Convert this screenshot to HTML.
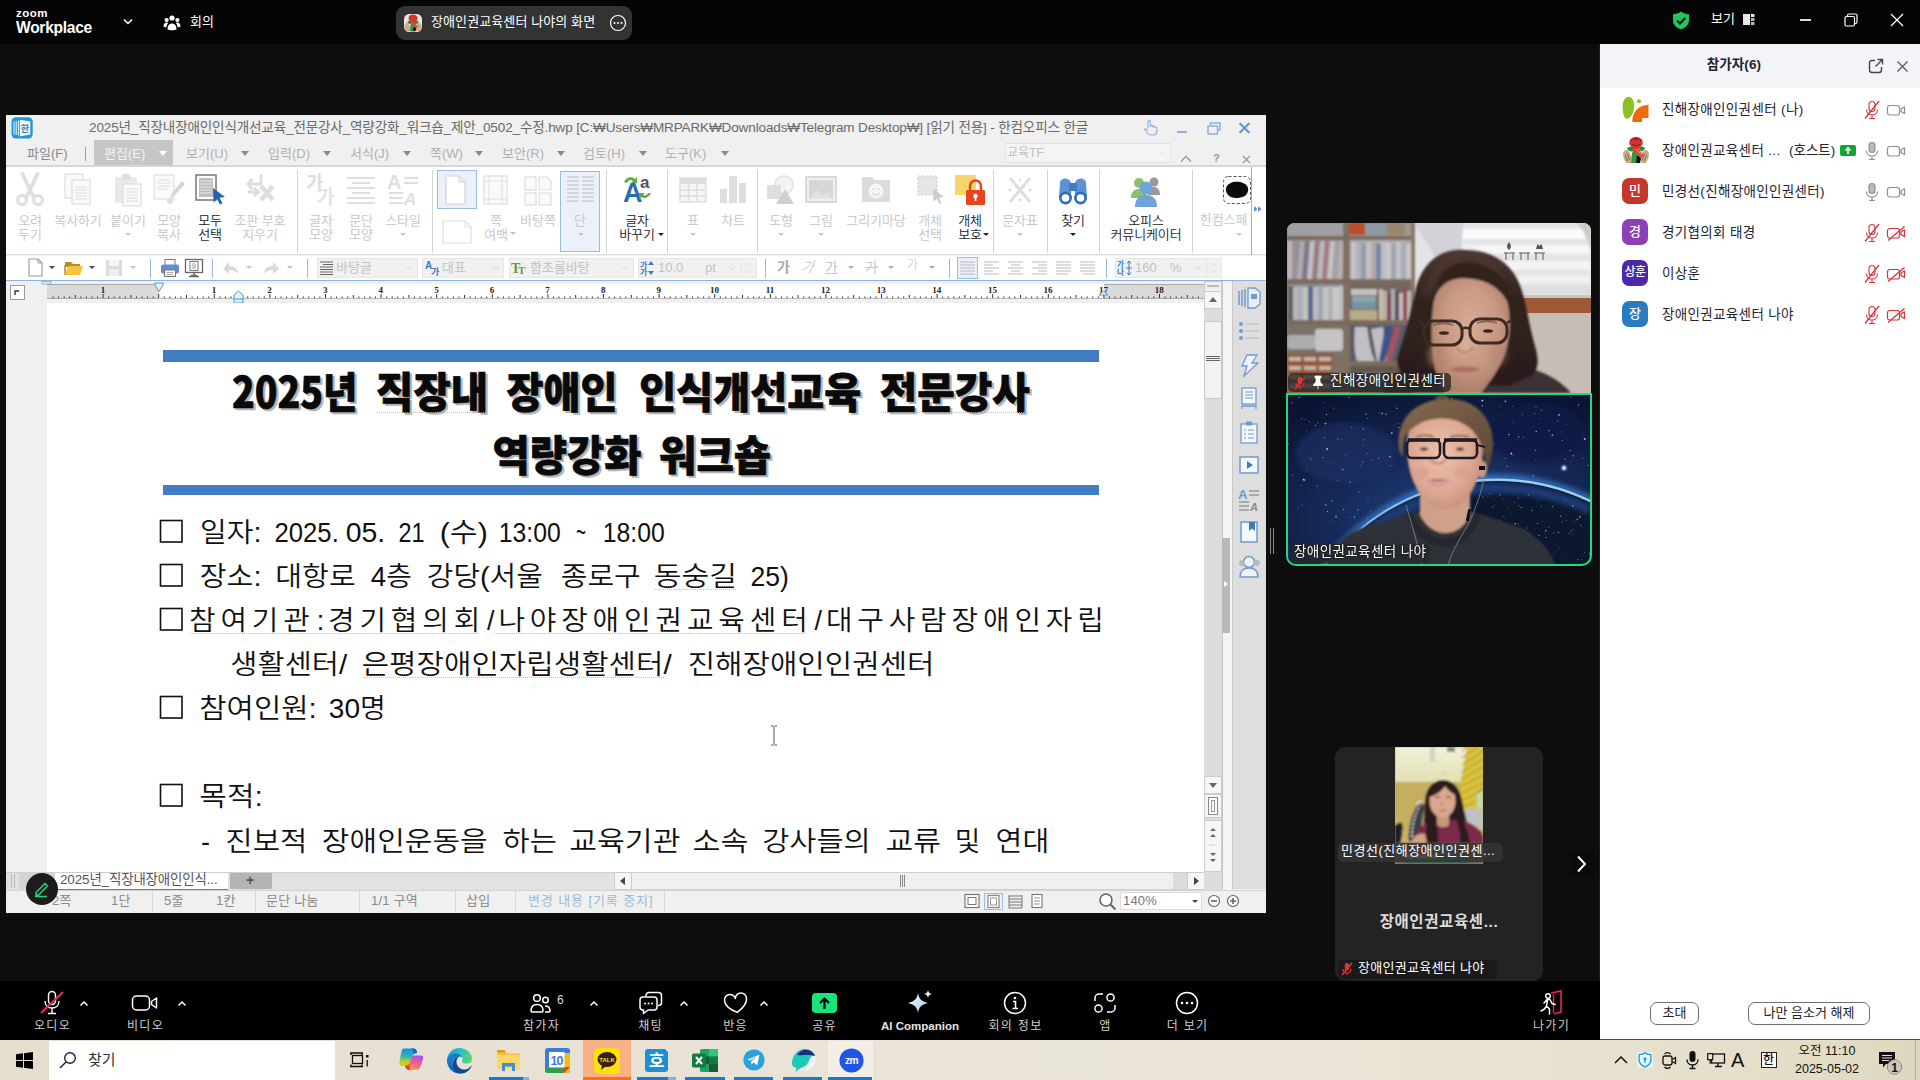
<!DOCTYPE html>
<html lang="ko">
<head>
<meta charset="utf-8">
<title>Zoom Workplace</title>
<style>

*{box-sizing:border-box;margin:0;padding:0}
html,body{width:1920px;height:1080px;overflow:hidden;background:#0d0d0d}
body{font-family:"Liberation Sans","Noto Sans CJK KR",sans-serif;position:relative;color:#fff}
.abs{position:absolute}
#topbar{position:absolute;left:0;top:0;width:1920px;height:44px;background:#050505}
#stage{position:absolute;left:0;top:44px;width:1600px;height:936px;background:#0d0d0d}
#zbar{position:absolute;left:0;top:981px;width:1600px;height:59px;background:#000}
#panel{position:absolute;left:1600px;top:44px;width:320px;height:996px;background:#fff;color:#222}
#panelhead{position:absolute;left:0;top:0;width:320px;height:44px;background:#f2f4f7}
#taskbar{position:absolute;left:0;top:1040px;width:1920px;height:40px;background:linear-gradient(90deg,#e5decf 0%,#e8e2d5 30%,#ebe6da 60%,#e7e1cf 84%,#e2dcc6 96%,#dcd6be 100%)}
#hwp{position:absolute;left:6px;top:115px;width:1260px;height:798px;background:#f0f0f0;color:#333;overflow:hidden}
#topbar .logo1{position:absolute;left:16px;top:6px;font-size:11.5px;font-weight:bold;letter-spacing:0.5px;color:#fff;line-height:14px}
#topbar .logo2{position:absolute;left:16px;top:18px;font-size:15.6px;font-weight:bold;color:#fff;line-height:20px;letter-spacing:-0.3px}
#topbar .t{position:absolute;color:#fff;font-size:13px;line-height:16px;white-space:nowrap}
#pill{position:absolute;left:396px;top:6px;width:236px;height:34px;border-radius:9px;background:#333}


.hw-title{font-size:13.56px;line-height:18px;color:#6a6a6a;text-align:center;white-space:nowrap;letter-spacing:-0.15px}
.hw-menu{font-size:13px;line-height:17px;white-space:nowrap}
.hw-lab{width:80px;text-align:center;font-weight:350;font-size:13px;line-height:14px;white-space:nowrap;letter-spacing:-0.1px}
.hw-st{font-size:13px;line-height:16px;color:#8a8a8a;white-space:nowrap;letter-spacing:0.2px}


.zl{position:absolute;top:1018px;width:120px;text-align:center;font-size:12px;line-height:16px;color:#cfcfcf;white-space:nowrap;letter-spacing:1.3px;padding-left:1px}
.pn{position:absolute;left:62px;font-size:13.5px;line-height:18px;color:#232333;white-space:nowrap;letter-spacing:0.35px}
.av{position:absolute;left:22px;width:26px;height:26px;border-radius:7px;color:#fff;font-size:13px;line-height:25px;text-align:center;font-weight:500;white-space:nowrap;overflow:hidden}
.pbtn{position:absolute;top:958px;height:23px;border:1px solid #6e6e6e;border-radius:7px;font-size:13px;line-height:19px;text-align:center;color:#222;background:#fff}
.tk{position:absolute;color:#111;white-space:nowrap}


.vlab{position:absolute;height:19px;border-radius:5px;background:rgba(30,30,30,.82);color:#fff;font-size:13px;line-height:18px;white-space:nowrap;overflow:hidden;letter-spacing:0.2px}

</style>
</head>
<body>
<div id="topbar">
<div class="logo1">zoom</div>
<div class="logo2">Workplace</div>
<svg class="abs" style="left:122px;top:18px" width="12" height="8" viewBox="0 0 12 8"><path d="M2 1.500 L6 5.500 L10 1.500" fill="none" stroke="#fff" stroke-width="1.500"/></svg>
<svg class="abs" style="left:163px;top:14px" width="18" height="17" viewBox="0 0 18 17"><g fill="#fff"><circle cx="9" cy="4" r="2.600"/><circle cx="3.600" cy="6" r="2.100"/><circle cx="14.400" cy="6" r="2.100"/><path d="M4.500 15.500c0-4 2-6 4.500-6s4.500 2 4.500 6c-1.500 1-7.500 1-9 0z"/><path d="M.5 12.500c0-2.500 1.400-4 3.200-4 .6 0 1.100.2 1.500.4-1 1-1.500 2.300-1.700 4.300-1.200 0-2.300-.2-3-.7z"/><path d="M17.500 12.500c0-2.500-1.400-4-3.200-4-.6 0-1.100.2-1.500.4 1 1 1.500 2.300 1.700 4.300 1.200 0 2.300-.2 3-.7z"/></g></svg>
<div class="t" style="left:190px;top:14px">회의</div>
<div id="pill">
<svg class="abs" style="left:8px;top:8px" width="18" height="18" viewBox="0 0 28 28"><rect width="28" height="28" rx="8" fill="#ece8e2"/><path d="M1 17c1-3 4-4 6-2l3 8-1 4H4c-2-3-3-6-3-10z" fill="#c9ad86"/><path d="M27 17c-1-3-4-4-6-2l-3 8 1 4h5c2-3 3-6 3-10z" fill="#c9ad86"/><path d="M11 27l1-6 4-2 3 3-1 5z" fill="#141414"/><path d="M5 12c3-2 6-2 9 0 3-2 7-2 9 0-1 3-4 4-7 3l-2 1-2-1c-3 1-6 0-7-3z" fill="#2a8a3a"/><path d="M9 27c1-5 0-9 2-12l3-2 2 3c-2 3-1 7-2 11z" fill="#2f9a40"/><path d="M13 11l9 8-3 3-9-8z" fill="#e8453e"/><ellipse cx="14" cy="6.500" rx="6.800" ry="5.800" fill="#d6332e"/></svg>
<div class="t" style="left:35px;top:8px;font-size:13px;letter-spacing:0.1px">장애인권교육센터 나야의 화면</div>
<svg class="abs" style="left:213px;top:8px" width="18" height="18" viewBox="0 0 18 18"><circle cx="9" cy="9" r="7.500" fill="none" stroke="#fff" stroke-width="1.200"/><circle cx="5.500" cy="9" r="1" fill="#fff"/><circle cx="9" cy="9" r="1" fill="#fff"/><circle cx="12.500" cy="9" r="1" fill="#fff"/></svg>
</div>
<svg class="abs" style="left:1672px;top:11px" width="18" height="19" viewBox="0 0 18 19"><path d="M9 .5c2.500 1.800 5 2.500 8 2.700v6c0 4.500-3.500 7.600-8 9.300-4.500-1.700-8-4.800-8-9.300v-6C4 3 6.500 2.300 9 .5z" fill="#23c55e"/><path d="M5 9.500l3 3 5.200-5.500" fill="none" stroke="#0a0a0a" stroke-width="2"/></svg>
<div class="t" style="left:1711px;top:11px">보기</div>
<svg class="abs" style="left:1743px;top:14px" width="12" height="12" viewBox="0 0 12 12"><rect x="0" y="0" width="7" height="11" fill="#e6e6e6"/><rect x="8" y="0" width="3.500" height="3" fill="#e6e6e6"/><rect x="8" y="4" width="3.500" height="3" fill="#bbb"/><rect x="8" y="8" width="3.500" height="3" fill="#bbb"/></svg>
<div class="abs" style="left:1800px;top:19px;width:11px;height:1.500px;background:#ddd"></div>
<svg class="abs" style="left:1844px;top:13px" width="14" height="14" viewBox="0 0 14 14"><rect x="1" y="3.500" width="9.500" height="9.500" rx="1.500" fill="none" stroke="#fff" stroke-width="1.200"/><path d="M3.500 3.500V2.500a1.500 1.500 0 0 1 1.500-1.500h6.500a1.500 1.500 0 0 1 1.500 1.500v6.500a1.500 1.500 0 0 1-1.500 1.500h-1" fill="none" stroke="#fff" stroke-width="1.200"/></svg>
<svg class="abs" style="left:1890px;top:13px" width="14" height="14" viewBox="0 0 14 14"><path d="M1 1l12 12M13 1L1 13" stroke="#fff" stroke-width="1.300"/></svg>
</div>

<div id="stage"></div>
<div id="hwp"><div class="abs" style="left:-6px;top:-115px;width:1920px;height:1080px">
<div class="abs" style="left:6px;top:115px;width:1260px;height:26px;background:#f0f0f0"></div>
<svg class="abs" style="left:11px;top:117px" width="22" height="22" viewBox="0 0 22 22"><rect x="0.500" y="0.300" width="21.200" height="21.200" rx="4.500" fill="#1c98d4"/><path d="M3 4.500v13M5.200 4v14M7.400 3.500v15" stroke="#d8f3fd" stroke-width="1.100"/><path d="M8.800 2.800l10.500 1.800v13l-10.500 1.800z" fill="#eef9fe"/><text x="13.800" y="14.800" font-size="9" font-weight="bold" text-anchor="middle" fill="#1c86c4" font-family="Liberation Sans, Noto Sans CJK KR, sans-serif">한</text></svg>
<div class="abs hw-title" style="left:89px;top:119px;width:997px">2025년_직장내장애인인식개선교육_전문강사_역량강화_워크숍_제안_0502_수정.hwp [C:₩Users₩MRPARK₩Downloads₩Telegram Desktop₩] [읽기 전용] - 한컴오피스 한글</div>
<svg class="abs" style="left:1143px;top:119px" width="15" height="17" viewBox="0 0 15 17"><path d="M5 9V2.500a1.200 1.200 0 0 1 2.400 0V8M7.400 7.500a1.100 1.100 0 0 1 2.200 0v1M9.600 8a1.100 1.100 0 0 1 2.200 0v1M11.800 9a1 1 0 0 1 2 0v3c0 2.500-1.500 4-4 4H8c-2 0-3-1-4-2.500L1.800 11c-.5-1 .8-1.800 1.600-.9L5 11.500" fill="none" stroke="#8db1de" stroke-width="1.100"/></svg>
<div class="abs" style="left:1177px;top:131px;width:10px;height:2px;background:#8db1de"></div>
<svg class="abs" style="left:1207px;top:122px" width="14" height="13" viewBox="0 0 14 13"><path d="M3.500 3.500V1h9.500v7h-2.500" fill="none" stroke="#8db1de" stroke-width="1.500"/><rect x="1" y="4" width="9.500" height="8" fill="none" stroke="#8db1de" stroke-width="1.500"/></svg>
<svg class="abs" style="left:1238px;top:122px" width="13" height="12" viewBox="0 0 13 12"><path d="M1.500 1l10 10M11.500 1l-10 10" stroke="#5c94d6" stroke-width="2"/></svg>
<div class="abs" style="left:6px;top:141px;width:1260px;height:26px;background:#f0f0f0;border-bottom:2px solid #d6d6d6"></div>
<div class="abs" style="left:94px;top:140px;width:79px;height:25px;background:#c6c6c6"></div>
<div class="abs" style="left:85px;top:147px;width:1px;height:14px;background:#7aa3d4"></div>
<div class="abs hw-menu" style="left:27px;top:145px;color:#8a8a8a">파일(F)</div>
<div class="abs hw-menu" style="left:104px;top:145px;color:#f4f4f4">편집(E)</div>
<div class="abs hw-menu" style="left:186px;top:145px;color:#b0b0b0">보기(U)</div>
<div class="abs hw-menu" style="left:268px;top:145px;color:#b0b0b0">입력(D)</div>
<div class="abs hw-menu" style="left:350px;top:145px;color:#b0b0b0">서식(J)</div>
<div class="abs hw-menu" style="left:430px;top:145px;color:#b0b0b0">쪽(W)</div>
<div class="abs hw-menu" style="left:502px;top:145px;color:#b0b0b0">보안(R)</div>
<div class="abs hw-menu" style="left:583px;top:145px;color:#b0b0b0">검토(H)</div>
<div class="abs hw-menu" style="left:665px;top:145px;color:#b0b0b0">도구(K)</div>
<div class="abs" style="left:159px;top:151px;border:4px solid transparent;border-top:5px solid #fff;border-bottom:0"></div>
<div class="abs" style="left:241px;top:151px;border:4px solid transparent;border-top:5px solid #8a8a8a;border-bottom:0"></div>
<div class="abs" style="left:323px;top:151px;border:4px solid transparent;border-top:5px solid #8a8a8a;border-bottom:0"></div>
<div class="abs" style="left:403px;top:151px;border:4px solid transparent;border-top:5px solid #8a8a8a;border-bottom:0"></div>
<div class="abs" style="left:475px;top:151px;border:4px solid transparent;border-top:5px solid #8a8a8a;border-bottom:0"></div>
<div class="abs" style="left:557px;top:151px;border:4px solid transparent;border-top:5px solid #8a8a8a;border-bottom:0"></div>
<div class="abs" style="left:639px;top:151px;border:4px solid transparent;border-top:5px solid #8a8a8a;border-bottom:0"></div>
<div class="abs" style="left:721px;top:151px;border:4px solid transparent;border-top:5px solid #8a8a8a;border-bottom:0"></div>
<div class="abs" style="left:1005px;top:143px;width:166px;height:20px;background:#f4f4f4;border:1px solid #e2e2e2"></div>
<div class="abs" style="left:1007px;top:145px;font-size:12px;color:#c0c0c0;line-height:16px">교육TF</div>
<svg class="abs" style="left:1159px;top:151px" width="8" height="5" viewBox="0 0 8 5"><path d="M1 1l3 3 3-3" fill="none" stroke="#ddd" stroke-width="1"/></svg>
<svg class="abs" style="left:1180px;top:155px" width="12" height="8" viewBox="0 0 12 8"><path d="M1 6.500l5-5 5 5" fill="none" stroke="#999" stroke-width="1.300"/></svg>
<div class="abs" style="left:1213px;top:152px;font-size:11px;color:#999;line-height:12px;font-weight:bold">?</div>
<svg class="abs" style="left:1242px;top:155px" width="9" height="9" viewBox="0 0 9 9"><path d="M1 1l7 7M8 1l-7 7" stroke="#999" stroke-width="1.300"/></svg>
<div class="abs" style="left:6px;top:167px;width:1260px;height:88px;background:#fff;border-bottom:1px solid #dcdcdc"></div>
<svg class="abs" style="left:12px;top:171px" width="36" height="38" viewBox="0 0 36 38"><g fill="none" stroke="#dedede"><path d="M10.500 3l10.500 22M25.500 3L15 25" stroke-width="4" stroke-linecap="round"/><circle cx="10" cy="29" r="4.500" stroke-width="3"/><circle cx="26" cy="29" r="4.500" stroke-width="3"/></g></svg>
<div class="abs hw-lab" style="left:-10px;top:214px;color:#c4c4c4">오려</div><div class="abs hw-lab" style="left:-10px;top:228px;color:#c4c4c4">두기</div>
<svg class="abs" style="left:60px;top:171px" width="36" height="38" viewBox="0 0 36 38"><g fill="#fafafa" stroke="#dedede" stroke-width="1.200"><rect x="5" y="3" width="18" height="24"/><rect x="12" y="9" width="18" height="24"/></g><path d="M15 16h12M15 19h12M15 22h12M15 25h12M15 28h12" stroke="#dedede" stroke-width="1"/></svg>
<div class="abs hw-lab" style="left:38px;top:214px;color:#c4c4c4">복사하기</div>
<svg class="abs" style="left:110px;top:171px" width="36" height="38" viewBox="0 0 36 38"><rect x="5" y="6" width="22" height="26" rx="2" fill="#e9e9e9"/><rect x="12" y="3" width="8" height="6" rx="2" fill="#dcdcdc"/><rect x="13" y="13" width="18" height="22" fill="#fafafa" stroke="#dedede" stroke-width="1.200"/><path d="M16 18h12M16 21h12M16 24h12M16 27h12M16 30h12" stroke="#dedede" stroke-width="1"/></svg>
<div class="abs hw-lab" style="left:88px;top:214px;color:#c4c4c4">붙이기</div>
<div class="abs" style="left:125px;top:233px;border:3px solid transparent;border-top:3px solid #c4c4c4;border-bottom:0"></div>
<svg class="abs" style="left:151px;top:171px" width="36" height="38" viewBox="0 0 36 38"><rect x="3" y="4" width="20" height="24" fill="#fafafa" stroke="#dedede" stroke-width="1.200"/><path d="M6 9h14M6 12h14M6 15h14M6 18h10" stroke="#dedede" stroke-width="1"/><path d="M31 10l3 3-10 11-5 4 2-6z" fill="#d6d6d6"/><circle cx="19" cy="30" r="3" fill="#dedede"/></svg>
<div class="abs hw-lab" style="left:129px;top:214px;color:#c4c4c4">모양</div><div class="abs hw-lab" style="left:129px;top:228px;color:#c4c4c4">복사</div>
<svg class="abs" style="left:192px;top:171px" width="36" height="38" viewBox="0 0 36 38"><rect x="4" y="4" width="20" height="25" fill="#fff" stroke="#7d7d7d" stroke-width="1.600"/><rect x="7" y="7" width="14" height="19" fill="#bdbdbd"/><path d="M8 10h12M8 13h12M8 16h12M8 19h12M8 22h12" stroke="#e8e8e8" stroke-width="1"/><path d="M21 17l12 9-5.500.8 3 5.500-2.500 1.200-3-5.500-3.500 3.500z" fill="#1e63b0"/></svg>
<div class="abs hw-lab" style="left:170px;top:214px;color:#222">모두</div><div class="abs hw-lab" style="left:170px;top:228px;color:#222">선택</div>
<svg class="abs" style="left:242px;top:171px" width="36" height="38" viewBox="0 0 36 38"><g stroke="#dedede" fill="none"><path d="M19 3v10H6M10.500 8l-5 5 5 5M6 21h10M12 17l5 4-5 4" stroke-width="2.800"/><path d="M19 15l12 14M31 15L19 29" stroke-width="4.500"/></g></svg>
<div class="abs hw-lab" style="left:220px;top:214px;color:#c4c4c4">조판 부호</div><div class="abs hw-lab" style="left:220px;top:228px;color:#c4c4c4">지우기</div>
<div class="abs" style="left:297px;top:170px;width:1px;height:83px;background:#d2d2d2"></div>
<svg class="abs" style="left:303px;top:171px" width="36" height="38" viewBox="0 0 36 38"><text x="3" y="19" font-size="19" fill="#dedede" font-weight="bold" font-family="Liberation Sans, Noto Sans CJK KR, sans-serif">가</text><text x="14" y="33" font-size="19" fill="#e4e4e4" font-weight="bold" font-family="Liberation Sans, Noto Sans CJK KR, sans-serif">가</text></svg>
<div class="abs hw-lab" style="left:281px;top:214px;color:#c4c4c4">글자</div><div class="abs hw-lab" style="left:281px;top:228px;color:#c4c4c4">모양</div>
<svg class="abs" style="left:343px;top:171px" width="36" height="38" viewBox="0 0 36 38"><path d="M4 7h28M9 12h18M4 17h28M9 22h18M4 27h28M4 32h28" stroke="#dedede" stroke-width="2"/></svg>
<div class="abs hw-lab" style="left:321px;top:214px;color:#c4c4c4">문단</div><div class="abs hw-lab" style="left:321px;top:228px;color:#c4c4c4">모양</div>
<svg class="abs" style="left:385px;top:171px" width="36" height="38" viewBox="0 0 36 38"><text x="2" y="18" font-size="20" fill="#dedede" font-weight="bold" font-family="Liberation Sans, sans-serif">A</text><path d="M19 7h14M19 12h14M4 22h14M4 27h14M4 32h14" stroke="#dedede" stroke-width="2"/><text x="19" y="34" font-size="17" fill="#dedede" font-weight="bold" font-style="italic" font-family="Liberation Sans, sans-serif">A</text></svg>
<div class="abs hw-lab" style="left:363px;top:214px;color:#c4c4c4">스타일</div>
<div class="abs" style="left:400px;top:233px;border:3px solid transparent;border-top:3px solid #c4c4c4;border-bottom:0"></div>
<div class="abs" style="left:432px;top:170px;width:1px;height:83px;background:#d2d2d2"></div>
<div class="abs" style="left:437px;top:170px;width:40px;height:39px;background:#eaf1fb;border:1px solid #9dbce4"></div>
<svg class="abs" style="left:437px;top:171px" width="36" height="38" viewBox="0 0 36 38"><path d="M9 5h13l6 6v22H9z" fill="#fff" stroke="#cfd3d8" stroke-width="1.200"/><path d="M22 5v6h6" fill="#eee" stroke="#cfd3d8" stroke-width="1"/></svg>
<svg class="abs" style="left:440px;top:218px" width="34" height="28" viewBox="0 0 34 28"><path d="M3 3h22l6 6v16H3z" fill="#fff" stroke="#dedede" stroke-width="1.200"/><path d="M25 3v6h6" fill="none" stroke="#dedede" stroke-width="1"/></svg>
<svg class="abs" style="left:478px;top:171px" width="36" height="38" viewBox="0 0 36 38"><rect x="6" y="5" width="23" height="28" fill="#fafafa" stroke="#dedede" stroke-width="1.200"/><path d="M11 5v28M24 5v28M6 10h23M6 28h23" stroke="#dedede" stroke-width="1"/></svg>
<div class="abs hw-lab" style="left:456px;top:214px;color:#c4c4c4">쪽</div><div class="abs hw-lab" style="left:456px;top:228px;color:#c4c4c4">여백</div>
<div class="abs" style="left:510px;top:232px;border:3px solid transparent;border-top:3px solid #c4c4c4;border-bottom:0"></div>
<svg class="abs" style="left:520px;top:171px" width="36" height="38" viewBox="0 0 36 38"><g fill="#fafafa" stroke="#dedede" stroke-width="1.200"><rect x="5" y="6" width="11" height="13"/><path d="M19 6h8l4 4v9H19z"/><rect x="5" y="22" width="11" height="12"/><rect x="19" y="22" width="12" height="12"/></g></svg>
<div class="abs hw-lab" style="left:498px;top:214px;color:#c4c4c4">바탕쪽</div>
<div class="abs" style="left:560px;top:171px;width:40px;height:81px;background:#eaf1fb;border:1px solid #9dbce4"></div>
<svg class="abs" style="left:562px;top:171px" width="36" height="38" viewBox="0 0 36 38"><path d="M5 6h12M5 10h12M5 14h12M5 18h12M5 22h12M5 26h12M5 30h12M20 6h12M20 10h12M20 14h12M20 18h12M20 22h12M20 26h12M20 30h12" stroke="#d4d8de" stroke-width="2"/></svg>
<div class="abs hw-lab" style="left:540px;top:214px;color:#c4c4c4">단</div>
<div class="abs" style="left:578px;top:233px;border:3px solid transparent;border-top:3px solid #c4c4c4;border-bottom:0"></div>
<div class="abs" style="left:606px;top:170px;width:1px;height:83px;background:#d2d2d2"></div>
<svg class="abs" style="left:619px;top:171px" width="36" height="38" viewBox="0 0 36 38"><text x="4" y="31" font-size="27" fill="#2a6bb5" font-weight="bold" font-family="Liberation Sans, sans-serif">A</text><text x="21" y="17" font-size="17" fill="#555" font-weight="bold" font-family="Liberation Sans, sans-serif">a</text><path d="M5 11c2-5 8-6 11-3l2-2v6h-6l2-2c-2-2-5-1-6 2z" fill="#5eae3a"/><path d="M32 22c-2 5-7 6-10 4l-2 2v-6h6l-2 2c2 1 4 0 5-2z" fill="#5eae3a"/></svg>
<div class="abs hw-lab" style="left:597px;top:214px;color:#222">글자</div><div class="abs hw-lab" style="left:597px;top:228px;color:#222">바꾸기</div>
<div class="abs" style="left:658px;top:233px;border:3px solid transparent;border-top:3px solid #222;border-bottom:0"></div>
<div class="abs" style="left:667px;top:170px;width:1px;height:83px;background:#d2d2d2"></div>
<svg class="abs" style="left:675px;top:171px" width="36" height="38" viewBox="0 0 36 38"><rect x="5" y="7" width="26" height="24" fill="#f6f6f6" stroke="#dedede" stroke-width="1.500"/><rect x="5" y="7" width="26" height="6" fill="#dedede"/><path d="M5 19h26M5 25h26M13.500 13v18M22 13v18" stroke="#dedede" stroke-width="1.500"/></svg>
<div class="abs hw-lab" style="left:653px;top:214px;color:#c4c4c4">표</div>
<div class="abs" style="left:690px;top:233px;border:3px solid transparent;border-top:3px solid #c4c4c4;border-bottom:0"></div>
<svg class="abs" style="left:715px;top:171px" width="36" height="38" viewBox="0 0 36 38"><rect x="5" y="18" width="7" height="14" fill="#dedede"/><rect x="14" y="5" width="8" height="27" fill="#dedede"/><rect x="24" y="12" width="7" height="20" fill="#dedede"/></svg>
<div class="abs hw-lab" style="left:693px;top:214px;color:#c4c4c4">차트</div>
<div class="abs" style="left:757px;top:170px;width:1px;height:83px;background:#d2d2d2"></div>
<svg class="abs" style="left:763px;top:171px" width="36" height="38" viewBox="0 0 36 38"><circle cx="21" cy="14" r="9" fill="#f4f4f4" stroke="#dedede" stroke-width="1.500"/><rect x="4" y="14" width="14" height="14" fill="#dedede"/><path d="M22 18l9 15H13z" fill="#d0d0d0"/></svg>
<div class="abs hw-lab" style="left:741px;top:214px;color:#c4c4c4">도형</div>
<div class="abs" style="left:778px;top:233px;border:3px solid transparent;border-top:3px solid #c4c4c4;border-bottom:0"></div>
<svg class="abs" style="left:803px;top:171px" width="36" height="38" viewBox="0 0 36 38"><rect x="3" y="6" width="30" height="25" fill="#f0f0f0" stroke="#d0d0d0" stroke-width="1.500"/><rect x="6" y="9" width="24" height="19" fill="#d6d6d6"/><path d="M6 28l8-9 6 6 4-4 6 7z" fill="#e2e2e2"/></svg>
<div class="abs hw-lab" style="left:781px;top:214px;color:#c4c4c4">그림</div>
<div class="abs" style="left:818px;top:233px;border:3px solid transparent;border-top:3px solid #c4c4c4;border-bottom:0"></div>
<svg class="abs" style="left:858px;top:171px" width="36" height="38" viewBox="0 0 36 38"><path d="M4 6h10l2 3h16v22H4z" fill="#dcdcdc"/><circle cx="18" cy="20" r="7.500" fill="#f6f6f6"/><circle cx="15.500" cy="18" r="1" fill="#d0d0d0"/><circle cx="20.500" cy="18" r="1" fill="#d0d0d0"/><path d="M14.500 22c2 2.500 5 2.500 7 0" stroke="#d0d0d0" fill="none" stroke-width="1.200"/></svg>
<div class="abs hw-lab" style="left:836px;top:214px;color:#c4c4c4">그리기마당</div>
<svg class="abs" style="left:912px;top:171px" width="36" height="38" viewBox="0 0 36 38"><rect x="6" y="5" width="19" height="19" fill="#e6e6e6" stroke="#cfcfcf" stroke-dasharray="2 2" stroke-width="1.200"/><path d="M21 17l11 9-5 .8 2.500 5-2.200 1-2.500-5-3.500 3z" fill="#cdcdcd"/></svg>
<div class="abs hw-lab" style="left:890px;top:214px;color:#c4c4c4">개체</div><div class="abs hw-lab" style="left:890px;top:228px;color:#c4c4c4">선택</div>
<svg class="abs" style="left:952px;top:171px" width="36" height="38" viewBox="0 0 36 38"><rect x="3" y="4" width="21" height="20" fill="#f9d36b"/><rect x="14" y="19" width="19" height="15" rx="1.500" fill="#e8441e"/><path d="M18 19v-4a5.500 5.500 0 0 1 11 0v4" fill="none" stroke="#e8441e" stroke-width="2.500"/><circle cx="23.500" cy="25" r="2.200" fill="#fff"/><rect x="22.600" y="26" width="1.800" height="4" fill="#fff"/></svg>
<div class="abs hw-lab" style="left:930px;top:214px;color:#222">개체</div><div class="abs hw-lab" style="left:930px;top:228px;color:#222">보호</div>
<div class="abs" style="left:983px;top:233px;border:3px solid transparent;border-top:3px solid #222;border-bottom:0"></div>
<div class="abs" style="left:993px;top:170px;width:1px;height:83px;background:#d2d2d2"></div>
<svg class="abs" style="left:1002px;top:171px" width="36" height="38" viewBox="0 0 36 38"><path d="M8 7l20 24M28 7L8 31" stroke="#dedede" stroke-width="3"/><circle cx="18" cy="9" r="1.500" fill="#dedede"/><circle cx="18" cy="29" r="1.500" fill="#dedede"/><circle cx="8" cy="19" r="1.500" fill="#dedede"/><circle cx="28" cy="19" r="1.500" fill="#dedede"/></svg>
<div class="abs hw-lab" style="left:980px;top:214px;color:#c4c4c4">문자표</div>
<div class="abs" style="left:1017px;top:233px;border:3px solid transparent;border-top:3px solid #c4c4c4;border-bottom:0"></div>
<div class="abs" style="left:1047px;top:170px;width:1px;height:83px;background:#d2d2d2"></div>
<svg class="abs" style="left:1055px;top:171px" width="36" height="38" viewBox="0 0 36 38"><path d="M5 12c0-6 10-6 11 0v14H4zM20 12c1-6 11-6 11 0l1 14H20z" fill="#5b93d3"/><rect x="14" y="12" width="8" height="8" fill="#3f7bc0"/><circle cx="10.500" cy="27" r="6.500" fill="#2f6fba"/><circle cx="25.500" cy="27" r="6.500" fill="#2f6fba"/><circle cx="10.500" cy="27" r="3.800" fill="#fff"/><circle cx="25.500" cy="27" r="3.800" fill="#fff"/></svg>
<div class="abs hw-lab" style="left:1033px;top:214px;color:#222">찾기</div>
<div class="abs" style="left:1070px;top:233px;border:3px solid transparent;border-top:3px solid #222;border-bottom:0"></div>
<div class="abs" style="left:1099px;top:170px;width:1px;height:83px;background:#d2d2d2"></div>
<svg class="abs" style="left:1128px;top:171px" width="36" height="38" viewBox="0 0 36 38"><circle cx="11" cy="12" r="5" fill="#8cc06a"/><path d="M3 27c0-7 4-9 8-9s6 2 7 5v4z" fill="#8cc06a"/><circle cx="26" cy="11" r="4.500" fill="#9a9a9a"/><path d="M20 24c0-6 3-8 6-8s6 2 6 8z" fill="#9a9a9a"/><circle cx="18" cy="17" r="6.500" fill="#6fa3da"/><path d="M7 36c0-9 5-12 11-12s11 3 11 12z" fill="#6fa3da"/></svg>
<div class="abs hw-lab" style="left:1106px;top:214px;color:#222">오피스</div><div class="abs hw-lab" style="left:1106px;top:228px;color:#222">커뮤니케이터</div>
<div class="abs" style="left:1192px;top:170px;width:1px;height:83px;background:#d2d2d2"></div>
<div class="abs" style="left:1192px;top:168px;width:59px;height:86px;overflow:hidden">
<svg class="abs" style="left:31px;top:8px" width="28" height="28" viewBox="0 0 28 28"><rect x="0.500" y="0.500" width="27" height="27" rx="5" fill="#fafafa" stroke="#555" stroke-dasharray="3 2" stroke-width="1"/><path d="M3 12c2-6 9-7 14-6s9 4 8 9-6 7-12 7-11-4-10-10z" fill="#0a0a0a"/></svg>
<div class="abs hw-lab" style="left:8px;top:45px;width:80px;text-align:left;color:#c4c4c4">한컴스페</div>
</div>
<div class="abs" style="left:1236px;top:233px;border:3px solid transparent;border-top:3px solid #c4c4c4;border-bottom:0"></div>
<div class="abs" style="left:1251px;top:167px;width:1px;height:88px;background:#8fb3dc"></div>
<svg class="abs" style="left:1254px;top:205px" width="8" height="8" viewBox="0 0 8 8"><path d="M0 1l3.500 3L0 7zM4 1l3.500 3L4 7z" fill="#5c94d6"/></svg>
<div class="abs" style="left:6px;top:256px;width:1260px;height:24px;background:#fff"></div>
<svg class="abs" style="left:28px;top:258px" width="16" height="19" viewBox="0 0 16 19"><path d="M1 1h9l4 4v13H1z" fill="#fff" stroke="#999" stroke-width="1.100"/><path d="M10 1v4h4" fill="none" stroke="#999" stroke-width="1"/></svg>
<div class="abs" style="left:49px;top:266px;border:3px solid transparent;border-top:3px solid #444;border-bottom:0"></div>
<svg class="abs" style="left:64px;top:260px" width="20" height="16" viewBox="0 0 20 16"><path d="M1 2h6l2 2h7v3H1z" fill="#b78c2c"/><path d="M1 15l3-9h15l-3 9z" fill="#f5c43c"/><path d="M1 5v10" stroke="#b78c2c" stroke-width="1.500"/></svg>
<div class="abs" style="left:89px;top:266px;border:3px solid transparent;border-top:3px solid #444;border-bottom:0"></div>
<svg class="abs" style="left:105px;top:259px" width="18" height="18" viewBox="0 0 18 18"><rect x="1" y="1" width="16" height="16" fill="#dcdcdc"/><rect x="4" y="1" width="10" height="6" fill="#f4f4f4"/><rect x="4" y="10" width="10" height="7" fill="#eee"/></svg>
<div class="abs" style="left:130px;top:266px;border:3px solid transparent;border-top:3px solid #c4c4c4;border-bottom:0"></div>
<div class="abs" style="left:150px;top:259px;width:1px;height:19px;background:#9ab8dd"></div>
<svg class="abs" style="left:160px;top:258px" width="20" height="20" viewBox="0 0 20 20"><rect x="5" y="1.500" width="10" height="6" fill="#fff" stroke="#777" stroke-width="1"/><rect x="1" y="6.500" width="18" height="9" rx="2" fill="#5b8fd0"/><rect x="4.500" y="12" width="11" height="6.500" fill="#fff" stroke="#777" stroke-width="1"/><path d="M6.500 14.500h7M6.500 16.500h7" stroke="#999" stroke-width=".8"/></svg>
<svg class="abs" style="left:184px;top:258px" width="20" height="20" viewBox="0 0 20 20"><rect x="1.500" y="1.500" width="17" height="13" fill="#fff" stroke="#666" stroke-width="1.300"/><rect x="6" y="3.500" width="8" height="9" fill="#fff" stroke="#777" stroke-width="1"/><path d="M8 6h4M8 8h4M8 10h4" stroke="#888" stroke-width=".8"/><path d="M7 17.500h6M10 14.500v3" stroke="#666" stroke-width="1.500"/><path d="M5 18.500h10" stroke="#666" stroke-width="1.500"/></svg>
<div class="abs" style="left:212px;top:259px;width:1px;height:19px;background:#9ab8dd"></div>
<svg class="abs" style="left:222px;top:260px" width="18" height="15" viewBox="0 0 18 15"><path d="M1 9l6-7v4c6 0 9 3 9 8-2-3-5-4-9-4v4z" fill="#d8d8d8"/></svg>
<div class="abs" style="left:246px;top:266px;border:3px solid transparent;border-top:3px solid #c4c4c4;border-bottom:0"></div>
<svg class="abs" style="left:262px;top:260px" width="18" height="15" viewBox="0 0 18 15"><path d="M17 9l-6-7v4c-6 0-9 3-9 8 2-3 5-4 9-4v4z" fill="#d8d8d8"/></svg>
<div class="abs" style="left:287px;top:266px;border:3px solid transparent;border-top:3px solid #c4c4c4;border-bottom:0"></div>
<div class="abs" style="left:307px;top:259px;width:1px;height:19px;background:#9ab8dd"></div>
<div class="abs" style="left:317px;top:258px;width:101px;height:20px;background:#f1f1f1;border:1px solid #e6e6e6"></div><svg class="abs" style="left:320px;top:261px" width="13" height="14" viewBox="0 0 13 14"><path d="M0 1h13M3 3.500h10M0 6h13M0 8.500h13M0 11h13M0 13.500h13" stroke="#666" stroke-width="1.100"/></svg><div class="abs" style="left:336px;top:260px;font-size:13px;line-height:16px;color:#c2c2c2;white-space:nowrap">바탕글</div><svg class="abs" style="left:406px;top:266px" width="7" height="5" viewBox="0 0 7 5"><path d="M.5 .5l3 3 3-3" fill="none" stroke="#d4d4d4" stroke-width="1"/></svg>
<div class="abs" style="left:422px;top:258px;width:82px;height:20px;background:#f1f1f1;border:1px solid #e6e6e6"></div><svg class="abs" style="left:425px;top:260px" width="16" height="16" viewBox="0 0 16 16"><text x="0" y="9" font-size="10" font-weight="bold" fill="#3b78c4" font-family="Liberation Sans, sans-serif">A</text><text x="6" y="15" font-size="9" font-weight="bold" fill="#3b78c4" font-family="Liberation Sans, Noto Sans CJK KR, sans-serif">가</text></svg><div class="abs" style="left:442px;top:260px;font-size:13px;line-height:16px;color:#c2c2c2;white-space:nowrap">대표</div><svg class="abs" style="left:492px;top:266px" width="7" height="5" viewBox="0 0 7 5"><path d="M.5 .5l3 3 3-3" fill="none" stroke="#d4d4d4" stroke-width="1"/></svg>
<div class="abs" style="left:509px;top:258px;width:125px;height:20px;background:#f1f1f1;border:1px solid #e6e6e6"></div><svg class="abs" style="left:511px;top:260px" width="18" height="16" viewBox="0 0 18 16"><text x="0" y="13" font-size="14" font-weight="bold" fill="#6a9a3a" font-family="Liberation Serif, serif">T</text><text x="7" y="14" font-size="11" font-weight="bold" fill="#6a9a3a" font-family="Liberation Serif, serif">T</text></svg><div class="abs" style="left:530px;top:260px;font-size:13px;line-height:16px;color:#c2c2c2;white-space:nowrap">함초롬바탕</div><svg class="abs" style="left:622px;top:266px" width="7" height="5" viewBox="0 0 7 5"><path d="M.5 .5l3 3 3-3" fill="none" stroke="#d4d4d4" stroke-width="1"/></svg>
<div class="abs" style="left:638px;top:258px;width:104px;height:20px;background:#f1f1f1;border:1px solid #e6e6e6"></div>
<div class="abs" style="left:741px;top:258px;width:16px;height:20px;background:#f1f1f1;border:1px solid #e6e6e6"></div>
<svg class="abs" style="left:640px;top:260px" width="16" height="16" viewBox="0 0 16 16"><text x="0" y="8" font-size="8" font-weight="bold" fill="#3b78c4" font-family="Liberation Sans, Noto Sans CJK KR, sans-serif">가</text><text x="0" y="15" font-size="8" font-weight="bold" fill="#3b78c4" font-family="Liberation Sans, Noto Sans CJK KR, sans-serif">가</text><path d="M11 1l3 4h-6zM11 15l3-4h-6z" fill="#3b78c4"/></svg>
<div class="abs" style="left:658px;top:260px;font-size:13px;line-height:16px;color:#c2c2c2">10.0</div>
<div class="abs" style="left:705px;top:260px;font-size:13px;line-height:16px;color:#c2c2c2">pt</div>
<svg class="abs" style="left:729px;top:266px" width="7" height="5" viewBox="0 0 7 5"><path d="M.5 .5l3 3 3-3" fill="none" stroke="#d4d4d4" stroke-width="1"/></svg>
<svg class="abs" style="left:746px;top:262px" width="6" height="12" viewBox="0 0 6 12"><path d="M.5 3.500l2.500-2.500 2.500 2.500M.5 8.500l2.500 2.500 2.500-2.500" fill="none" stroke="#ddd" stroke-width="1"/></svg>
<div class="abs" style="left:765px;top:259px;width:1px;height:19px;background:#9ab8dd"></div>
<div class="abs" style="left:777px;top:259px;font-size:14px;line-height:17px;color:#aaa;font-weight:bold">가</div>
<div class="abs" style="left:801px;top:259px;font-size:14px;line-height:17px;color:#ccc;font-style:italic;transform:skewX(-12deg)">가</div>
<div class="abs" style="left:825px;top:259px;font-size:14px;line-height:17px;color:#c4c4c4;text-decoration:underline">가</div>
<div class="abs" style="left:848px;top:266px;border:3px solid transparent;border-top:3px solid #aaa;border-bottom:0"></div>
<div class="abs" style="left:865px;top:259px;font-size:14px;line-height:17px;color:#ccc;text-decoration:line-through">가</div>
<div class="abs" style="left:888px;top:266px;border:3px solid transparent;border-top:3px solid #aaa;border-bottom:0"></div>
<div class="abs" style="left:907px;top:258px;font-size:12px;line-height:15px;color:#d4d4d4">가</div>
<div class="abs" style="left:929px;top:266px;border:3px solid transparent;border-top:3px solid #aaa;border-bottom:0"></div>
<div class="abs" style="left:949px;top:259px;width:1px;height:19px;background:#9ab8dd"></div>
<div class="abs" style="left:957px;top:257px;width:21px;height:22px;background:#eaf1fb;border:1px solid #9dbce4"></div>
<svg class="abs" style="left:960px;top:261px" width="15" height="14" viewBox="0 -1 15 14"><path d="M0 0h15M0 3h15M0 6h15M0 9h15M0 12h15" stroke="#c8ccd2" stroke-width="1.400"/></svg>
<svg class="abs" style="left:984px;top:261px" width="15" height="14" viewBox="0 -1 15 14"><path d="M0 0h15M0 3h9M0 6h15M0 9h9M0 12h15" stroke="#d2d2d2" stroke-width="1.400"/></svg>
<svg class="abs" style="left:1008px;top:261px" width="15" height="14" viewBox="0 -1 15 14"><path d="M0 0h15M3 3h9M0 6h15M3 9h9M0 12h15" stroke="#d2d2d2" stroke-width="1.400"/></svg>
<svg class="abs" style="left:1032px;top:261px" width="15" height="14" viewBox="0 -1 15 14"><path d="M0 0h15M6 3h9M0 6h15M6 9h9M0 12h15" stroke="#d2d2d2" stroke-width="1.400"/></svg>
<svg class="abs" style="left:1056px;top:261px" width="15" height="14" viewBox="0 -1 15 14"><path d="M0 0h15M0 3h15M0 6h15M0 9h15M0 12h12" stroke="#d2d2d2" stroke-width="1.400"/></svg>
<svg class="abs" style="left:1080px;top:261px" width="15" height="14" viewBox="0 -1 15 14"><path d="M0 0h15M0 3h15M0 6h15M0 9h15M3 12h12" stroke="#d2d2d2" stroke-width="1.400"/></svg>
<div class="abs" style="left:1106px;top:259px;width:1px;height:19px;background:#9ab8dd"></div>
<div class="abs" style="left:1115px;top:258px;width:92px;height:20px;background:#f1f1f1;border:1px solid #e6e6e6"></div>
<div class="abs" style="left:1206px;top:258px;width:16px;height:20px;background:#f1f1f1;border:1px solid #e6e6e6"></div>
<svg class="abs" style="left:1117px;top:260px" width="16" height="16" viewBox="0 0 16 16"><text x="0" y="7" font-size="7.500" font-weight="bold" fill="#3b78c4" font-family="Liberation Sans, Noto Sans CJK KR, sans-serif">가</text><text x="0" y="15" font-size="7.500" font-weight="bold" fill="#3b78c4" font-family="Liberation Sans, Noto Sans CJK KR, sans-serif">나</text><path d="M12 1v14M10 3.500l2-2.500 2 2.500M10 12.500l2 2.500 2-2.500M9 8h6" stroke="#3b78c4" fill="none" stroke-width="1"/></svg>
<div class="abs" style="left:1135px;top:260px;font-size:13px;line-height:16px;color:#c2c2c2">160</div>
<div class="abs" style="left:1170px;top:260px;font-size:13px;line-height:16px;color:#c2c2c2">%</div>
<svg class="abs" style="left:1194px;top:266px" width="7" height="5" viewBox="0 0 7 5"><path d="M.5 .5l3 3 3-3" fill="none" stroke="#d4d4d4" stroke-width="1"/></svg>
<svg class="abs" style="left:1211px;top:262px" width="6" height="12" viewBox="0 0 6 12"><path d="M.5 3.500l2.500-2.500 2.500 2.500M.5 8.500l2.500 2.500 2.500-2.500" fill="none" stroke="#ddd" stroke-width="1"/></svg>
<div class="abs" style="left:6px;top:280px;width:1260px;height:1px;background:#8fb3dc"></div>
<div class="abs" style="left:6px;top:281px;width:1260px;height:22px;background:#f0f0f0"></div>
<div class="abs" style="left:10px;top:285px;width:15px;height:15px;background:#fff;border:1px solid #999"></div>
<svg class="abs" style="left:14px;top:290px" width="6" height="6" viewBox="0 0 6 6"><path d="M1 5V1h4" fill="none" stroke="#333" stroke-width="1.400"/></svg>
<div class="abs" style="left:47px;top:284px;width:1157px;height:15px;background:#fff"></div>
<div class="abs" style="left:47px;top:284px;width:112px;height:15px;background:#dadada;border-top:1px solid #aaa"></div>
<div class="abs" style="left:1104px;top:284px;width:100px;height:15px;background:#dadada;border-top:1px solid #aaa"></div>
<svg class="abs" style="left:0;top:281px" width="1266" height="22" viewBox="0 0 1266 22"><path d="M53.1 15.5V17M58.6 15.5V17M64.2 15.5V17M69.7 15.5V17M75.3 14.0V17M80.9 15.5V17M86.4 15.5V17M92.0 15.5V17M97.5 15.5V17M103.1 13.0V17M108.7 15.5V17M114.2 15.5V17M119.8 15.5V17M125.3 15.5V17M130.9 14.0V17M136.5 15.5V17M142.0 15.5V17M147.6 15.5V17M153.1 15.5V17M158.7 13.0V17M164.3 15.5V17M169.8 15.5V17M175.4 15.5V17M180.9 15.5V17M186.5 14.0V17M192.1 15.5V17M197.6 15.5V17M203.2 15.5V17M208.7 15.5V17M214.3 13.0V17M219.9 15.5V17M225.4 15.5V17M231.0 15.5V17M236.5 15.5V17M242.1 14.0V17M247.7 15.5V17M253.2 15.5V17M258.8 15.5V17M264.3 15.5V17M269.9 13.0V17M275.5 15.5V17M281.0 15.5V17M286.6 15.5V17M292.1 15.5V17M297.7 14.0V17M303.3 15.5V17M308.8 15.5V17M314.4 15.5V17M319.9 15.5V17M325.5 13.0V17M331.1 15.5V17M336.6 15.5V17M342.2 15.5V17M347.7 15.5V17M353.3 14.0V17M358.9 15.5V17M364.4 15.5V17M370.0 15.5V17M375.5 15.5V17M381.1 13.0V17M386.7 15.5V17M392.2 15.5V17M397.8 15.5V17M403.3 15.5V17M408.9 14.0V17M414.5 15.5V17M420.0 15.5V17M425.6 15.5V17M431.1 15.5V17M436.7 13.0V17M442.3 15.5V17M447.8 15.5V17M453.4 15.5V17M458.9 15.5V17M464.5 14.0V17M470.1 15.5V17M475.6 15.5V17M481.2 15.5V17M486.7 15.5V17M492.3 13.0V17M497.9 15.5V17M503.4 15.5V17M509.0 15.5V17M514.5 15.5V17M520.1 14.0V17M525.7 15.5V17M531.2 15.5V17M536.8 15.5V17M542.3 15.5V17M547.9 13.0V17M553.5 15.5V17M559.0 15.5V17M564.6 15.5V17M570.1 15.5V17M575.7 14.0V17M581.3 15.5V17M586.8 15.5V17M592.4 15.5V17M597.9 15.5V17M603.5 13.0V17M609.1 15.5V17M614.6 15.5V17M620.2 15.5V17M625.7 15.5V17M631.3 14.0V17M636.9 15.5V17M642.4 15.5V17M648.0 15.5V17M653.5 15.5V17M659.1 13.0V17M664.7 15.5V17M670.2 15.5V17M675.8 15.5V17M681.3 15.5V17M686.9 14.0V17M692.5 15.5V17M698.0 15.5V17M703.6 15.5V17M709.1 15.5V17M714.7 13.0V17M720.3 15.5V17M725.8 15.5V17M731.4 15.5V17M736.9 15.5V17M742.5 14.0V17M748.1 15.5V17M753.6 15.5V17M759.2 15.5V17M764.7 15.5V17M770.3 13.0V17M775.9 15.5V17M781.4 15.5V17M787.0 15.5V17M792.5 15.5V17M798.1 14.0V17M803.7 15.5V17M809.2 15.5V17M814.8 15.5V17M820.3 15.5V17M825.9 13.0V17M831.5 15.5V17M837.0 15.5V17M842.6 15.5V17M848.1 15.5V17M853.7 14.0V17M859.3 15.5V17M864.8 15.5V17M870.4 15.5V17M875.9 15.5V17M881.5 13.0V17M887.1 15.5V17M892.6 15.5V17M898.2 15.5V17M903.7 15.5V17M909.3 14.0V17M914.9 15.5V17M920.4 15.5V17M926.0 15.5V17M931.5 15.5V17M937.1 13.0V17M942.7 15.5V17M948.2 15.5V17M953.8 15.5V17M959.3 15.5V17M964.9 14.0V17M970.5 15.5V17M976.0 15.5V17M981.6 15.5V17M987.1 15.5V17M992.7 13.0V17M998.3 15.5V17M1003.8 15.5V17M1009.4 15.5V17M1014.9 15.5V17M1020.5 14.0V17M1026.1 15.5V17M1031.6 15.5V17M1037.2 15.5V17M1042.7 15.5V17M1048.3 13.0V17M1053.9 15.5V17M1059.4 15.5V17M1065.0 15.5V17M1070.5 15.5V17M1076.1 14.0V17M1081.7 15.5V17M1087.2 15.5V17M1092.8 15.5V17M1098.3 15.5V17M1103.9 13.0V17M1109.5 15.5V17M1115.0 15.5V17M1120.6 15.5V17M1126.1 15.5V17M1131.7 14.0V17M1137.3 15.5V17M1142.8 15.5V17M1148.4 15.5V17M1153.9 15.5V17M1159.5 13.0V17M1165.1 15.5V17M1170.6 15.5V17M1176.2 15.5V17M1181.7 15.5V17M1187.3 14.0V17M1192.9 15.5V17M1198.4 15.5V17" stroke="#333" stroke-width="1"/><path d="M47 17.500H1204" stroke="#888" stroke-width=".6"/><text x="103.0" y="12" font-size="9" font-weight="bold" text-anchor="middle" fill="#222" font-family="Liberation Serif, serif">1</text><text x="214.0" y="12" font-size="9" font-weight="bold" text-anchor="middle" fill="#222" font-family="Liberation Serif, serif">1</text><text x="269.6" y="12" font-size="9" font-weight="bold" text-anchor="middle" fill="#222" font-family="Liberation Serif, serif">2</text><text x="325.2" y="12" font-size="9" font-weight="bold" text-anchor="middle" fill="#222" font-family="Liberation Serif, serif">3</text><text x="380.8" y="12" font-size="9" font-weight="bold" text-anchor="middle" fill="#222" font-family="Liberation Serif, serif">4</text><text x="436.4" y="12" font-size="9" font-weight="bold" text-anchor="middle" fill="#222" font-family="Liberation Serif, serif">5</text><text x="492.0" y="12" font-size="9" font-weight="bold" text-anchor="middle" fill="#222" font-family="Liberation Serif, serif">6</text><text x="547.6" y="12" font-size="9" font-weight="bold" text-anchor="middle" fill="#222" font-family="Liberation Serif, serif">7</text><text x="603.2" y="12" font-size="9" font-weight="bold" text-anchor="middle" fill="#222" font-family="Liberation Serif, serif">8</text><text x="658.8" y="12" font-size="9" font-weight="bold" text-anchor="middle" fill="#222" font-family="Liberation Serif, serif">9</text><text x="714.4" y="12" font-size="9" font-weight="bold" text-anchor="middle" fill="#222" font-family="Liberation Serif, serif">10</text><text x="770.0" y="12" font-size="9" font-weight="bold" text-anchor="middle" fill="#222" font-family="Liberation Serif, serif">11</text><text x="825.6" y="12" font-size="9" font-weight="bold" text-anchor="middle" fill="#222" font-family="Liberation Serif, serif">12</text><text x="881.2" y="12" font-size="9" font-weight="bold" text-anchor="middle" fill="#222" font-family="Liberation Serif, serif">13</text><text x="936.8" y="12" font-size="9" font-weight="bold" text-anchor="middle" fill="#222" font-family="Liberation Serif, serif">14</text><text x="992.4" y="12" font-size="9" font-weight="bold" text-anchor="middle" fill="#222" font-family="Liberation Serif, serif">15</text><text x="1048.0" y="12" font-size="9" font-weight="bold" text-anchor="middle" fill="#222" font-family="Liberation Serif, serif">16</text><text x="1103.6" y="12" font-size="9" font-weight="bold" text-anchor="middle" fill="#222" font-family="Liberation Serif, serif">17</text><text x="1159.2" y="12" font-size="9" font-weight="bold" text-anchor="middle" fill="#222" font-family="Liberation Serif, serif">18</text><path d="M154.500 2h9l-1 3-3.500 5.500-3.500-5.500z" fill="#dff0fa" stroke="#5a9ac8" stroke-width="1"/><path d="M234 14l4.500-4 4.500 4v8h-9z" fill="#dff0fa" stroke="#5a9ac8" stroke-width="1"/><path d="M234 18h9" stroke="#5a9ac8" stroke-width="1"/><path d="M1099 14l4.500-4 4.500 4z" fill="#dff0fa" stroke="#5a9ac8" stroke-width="1"/><rect x="42" y="0.500" width="9" height="2.500" fill="#e6f2fa" stroke="#7aa6cc" stroke-width=".8"/></svg>
<div class="abs" style="left:6px;top:300px;width:41px;height:572px;background:#f0f0f0"></div>
<div class="abs" style="left:47px;top:303px;width:1157px;height:569px;background:#fff"></div>
<div class="abs" style="left:163px;top:350px;width:936px;height:12px;background:#437dc1"></div>
<div class="abs" style="left:163px;top:485px;width:936px;height:10px;background:#437dc1"></div>
<svg class="abs" style="left:0;top:0" width="1266" height="913" viewBox="0 0 1266 913"><text x="234.2" y="410.2" font-size="42.5" font-weight="900" fill="#b4b4b4" stroke="#b4b4b4" stroke-width="0.7" textLength="125.5" lengthAdjust="spacingAndGlyphs" font-family="Noto Sans CJK KR, sans-serif">2025년</text><text x="378.2" y="410.2" font-size="42.5" font-weight="900" fill="#b4b4b4" stroke="#b4b4b4" stroke-width="0.7" textLength="112.2" lengthAdjust="spacingAndGlyphs" font-family="Noto Sans CJK KR, sans-serif">직장내</text><text x="508.7" y="410.2" font-size="42.5" font-weight="900" fill="#b4b4b4" stroke="#b4b4b4" stroke-width="0.7" textLength="111.0" lengthAdjust="spacingAndGlyphs" font-family="Noto Sans CJK KR, sans-serif">장애인</text><text x="641.5" y="410.2" font-size="42.5" font-weight="900" fill="#b4b4b4" stroke="#b4b4b4" stroke-width="0.7" textLength="221.9" lengthAdjust="spacingAndGlyphs" font-family="Noto Sans CJK KR, sans-serif">인식개선교육</text><text x="881.9" y="410.2" font-size="42.5" font-weight="900" fill="#b4b4b4" stroke="#b4b4b4" stroke-width="0.7" textLength="150.2" lengthAdjust="spacingAndGlyphs" font-family="Noto Sans CJK KR, sans-serif">전문강사</text><text x="494.7" y="473.2" font-size="42.5" font-weight="900" fill="#b4b4b4" stroke="#b4b4b4" stroke-width="0.7" textLength="149.0" lengthAdjust="spacingAndGlyphs" font-family="Noto Sans CJK KR, sans-serif">역량강화</text><text x="661.2" y="473.2" font-size="42.5" font-weight="900" fill="#b4b4b4" stroke="#b4b4b4" stroke-width="0.7" textLength="112.2" lengthAdjust="spacingAndGlyphs" font-family="Noto Sans CJK KR, sans-serif">워크숍</text><text x="232.0" y="408.0" font-size="42.5" font-weight="900" fill="#0a0a0a" stroke="#0a0a0a" stroke-width="0.7" textLength="125.5" lengthAdjust="spacingAndGlyphs" font-family="Noto Sans CJK KR, sans-serif">2025년</text><text x="376.0" y="408.0" font-size="42.5" font-weight="900" fill="#0a0a0a" stroke="#0a0a0a" stroke-width="0.7" textLength="112.2" lengthAdjust="spacingAndGlyphs" font-family="Noto Sans CJK KR, sans-serif">직장내</text><text x="506.5" y="408.0" font-size="42.5" font-weight="900" fill="#0a0a0a" stroke="#0a0a0a" stroke-width="0.7" textLength="111.0" lengthAdjust="spacingAndGlyphs" font-family="Noto Sans CJK KR, sans-serif">장애인</text><text x="639.3" y="408.0" font-size="42.5" font-weight="900" fill="#0a0a0a" stroke="#0a0a0a" stroke-width="0.7" textLength="221.9" lengthAdjust="spacingAndGlyphs" font-family="Noto Sans CJK KR, sans-serif">인식개선교육</text><text x="879.7" y="408.0" font-size="42.5" font-weight="900" fill="#0a0a0a" stroke="#0a0a0a" stroke-width="0.7" textLength="150.2" lengthAdjust="spacingAndGlyphs" font-family="Noto Sans CJK KR, sans-serif">전문강사</text><text x="492.5" y="471.0" font-size="42.5" font-weight="900" fill="#0a0a0a" stroke="#0a0a0a" stroke-width="0.7" textLength="149.0" lengthAdjust="spacingAndGlyphs" font-family="Noto Sans CJK KR, sans-serif">역량강화</text><text x="659.0" y="471.0" font-size="42.5" font-weight="900" fill="#0a0a0a" stroke="#0a0a0a" stroke-width="0.7" textLength="112.2" lengthAdjust="spacingAndGlyphs" font-family="Noto Sans CJK KR, sans-serif">워크숍</text><text x="200.0" y="541.5" font-size="27" font-weight="350" fill="#111" textLength="61.5" lengthAdjust="spacingAndGlyphs" font-family="Liberation Sans, Noto Sans CJK KR, sans-serif">일자:</text><text x="274.5" y="541.5" font-size="27" font-weight="350" fill="#111" textLength="64.3" lengthAdjust="spacingAndGlyphs" font-family="Liberation Sans, Noto Sans CJK KR, sans-serif">2025.</text><text x="345.7" y="541.5" font-size="27" font-weight="350" fill="#111" textLength="39.5" lengthAdjust="spacingAndGlyphs" font-family="Liberation Sans, Noto Sans CJK KR, sans-serif">05.</text><text x="398.5" y="541.5" font-size="27" font-weight="350" fill="#111" textLength="26.1" lengthAdjust="spacingAndGlyphs" font-family="Liberation Sans, Noto Sans CJK KR, sans-serif">21</text><text x="439.8" y="541.5" font-size="27" font-weight="350" fill="#111" textLength="48.0" lengthAdjust="spacingAndGlyphs" font-family="Liberation Sans, Noto Sans CJK KR, sans-serif">(수)</text><text x="498.8" y="541.5" font-size="27" font-weight="350" fill="#111" textLength="62.0" lengthAdjust="spacingAndGlyphs" font-family="Liberation Sans, Noto Sans CJK KR, sans-serif">13:00</text><text x="576.0" y="541.5" font-size="27" font-weight="350" fill="#111" textLength="10.0" lengthAdjust="spacingAndGlyphs" font-family="Liberation Sans, Noto Sans CJK KR, sans-serif">~</text><text x="602.8" y="541.5" font-size="27" font-weight="350" fill="#111" textLength="62.0" lengthAdjust="spacingAndGlyphs" font-family="Liberation Sans, Noto Sans CJK KR, sans-serif">18:00</text><text x="199.8" y="585.5" font-size="27" font-weight="350" fill="#111" textLength="61.7" lengthAdjust="spacingAndGlyphs" font-family="Liberation Sans, Noto Sans CJK KR, sans-serif">장소:</text><text x="275.3" y="585.5" font-size="27" font-weight="350" fill="#111" textLength="80.4" lengthAdjust="spacingAndGlyphs" font-family="Liberation Sans, Noto Sans CJK KR, sans-serif">대항로</text><text x="370.8" y="585.5" font-size="27" font-weight="350" fill="#111" textLength="41.0" lengthAdjust="spacingAndGlyphs" font-family="Liberation Sans, Noto Sans CJK KR, sans-serif">4층</text><text x="426.8" y="585.5" font-size="27" font-weight="350" fill="#111" textLength="116.0" lengthAdjust="spacingAndGlyphs" font-family="Liberation Sans, Noto Sans CJK KR, sans-serif">강당(서울</text><text x="560.8" y="585.5" font-size="27" font-weight="350" fill="#111" textLength="80.0" lengthAdjust="spacingAndGlyphs" font-family="Liberation Sans, Noto Sans CJK KR, sans-serif">종로구</text><text x="653.8" y="585.5" font-size="27" font-weight="350" fill="#111" textLength="83.3" lengthAdjust="spacingAndGlyphs" font-family="Liberation Sans, Noto Sans CJK KR, sans-serif">동숭길</text><text x="750.4" y="585.5" font-size="27" font-weight="350" fill="#111" textLength="38.4" lengthAdjust="spacingAndGlyphs" font-family="Liberation Sans, Noto Sans CJK KR, sans-serif">25)</text><text x="230.3" y="673.5" font-size="27" font-weight="350" fill="#111" textLength="116.9" lengthAdjust="spacingAndGlyphs" font-family="Liberation Sans, Noto Sans CJK KR, sans-serif">생활센터/</text><text x="361.7" y="673.5" font-size="27" font-weight="350" fill="#111" textLength="310.1" lengthAdjust="spacingAndGlyphs" font-family="Liberation Sans, Noto Sans CJK KR, sans-serif">은평장애인자립생활센터/</text><text x="687.7" y="673.5" font-size="27" font-weight="350" fill="#111" textLength="246.8" lengthAdjust="spacingAndGlyphs" font-family="Liberation Sans, Noto Sans CJK KR, sans-serif">진해장애인인권센터</text><text x="199.3" y="717.5" font-size="27" font-weight="350" fill="#111" textLength="117.5" lengthAdjust="spacingAndGlyphs" font-family="Liberation Sans, Noto Sans CJK KR, sans-serif">참여인원:</text><text x="328.8" y="717.5" font-size="27" font-weight="350" fill="#111" textLength="57.0" lengthAdjust="spacingAndGlyphs" font-family="Liberation Sans, Noto Sans CJK KR, sans-serif">30명</text><text x="199.3" y="805.5" font-size="27" font-weight="350" fill="#111" textLength="63.5" lengthAdjust="spacingAndGlyphs" font-family="Liberation Sans, Noto Sans CJK KR, sans-serif">목적:</text><text x="225.3" y="850.5" font-size="27" font-weight="350" fill="#111" textLength="82.0" lengthAdjust="spacingAndGlyphs" font-family="Liberation Sans, Noto Sans CJK KR, sans-serif">진보적</text><text x="321.8" y="850.5" font-size="27" font-weight="350" fill="#111" textLength="166.0" lengthAdjust="spacingAndGlyphs" font-family="Liberation Sans, Noto Sans CJK KR, sans-serif">장애인운동을</text><text x="502.6" y="850.5" font-size="27" font-weight="350" fill="#111" textLength="54.2" lengthAdjust="spacingAndGlyphs" font-family="Liberation Sans, Noto Sans CJK KR, sans-serif">하는</text><text x="569.2" y="850.5" font-size="27" font-weight="350" fill="#111" textLength="111.3" lengthAdjust="spacingAndGlyphs" font-family="Liberation Sans, Noto Sans CJK KR, sans-serif">교육기관</text><text x="692.5" y="850.5" font-size="27" font-weight="350" fill="#111" textLength="55.8" lengthAdjust="spacingAndGlyphs" font-family="Liberation Sans, Noto Sans CJK KR, sans-serif">소속</text><text x="762.2" y="850.5" font-size="27" font-weight="350" fill="#111" textLength="108.5" lengthAdjust="spacingAndGlyphs" font-family="Liberation Sans, Noto Sans CJK KR, sans-serif">강사들의</text><text x="885.4" y="850.5" font-size="27" font-weight="350" fill="#111" textLength="55.6" lengthAdjust="spacingAndGlyphs" font-family="Liberation Sans, Noto Sans CJK KR, sans-serif">교류</text><text x="954.8" y="850.5" font-size="27" font-weight="350" fill="#111" textLength="25.6" lengthAdjust="spacingAndGlyphs" font-family="Liberation Sans, Noto Sans CJK KR, sans-serif">및</text><text x="995.6" y="850.5" font-size="27" font-weight="350" fill="#111" textLength="53.6" lengthAdjust="spacingAndGlyphs" font-family="Liberation Sans, Noto Sans CJK KR, sans-serif">연대</text><text x="189.0" y="629.5" font-size="27" font-weight="350" fill="#111" textLength="26.6" lengthAdjust="spacingAndGlyphs" font-family="Liberation Sans, Noto Sans CJK KR, sans-serif">참</text><text x="220.4" y="629.5" font-size="27" font-weight="350" fill="#111" textLength="26.6" lengthAdjust="spacingAndGlyphs" font-family="Liberation Sans, Noto Sans CJK KR, sans-serif">여</text><text x="251.8" y="629.5" font-size="27" font-weight="350" fill="#111" textLength="26.6" lengthAdjust="spacingAndGlyphs" font-family="Liberation Sans, Noto Sans CJK KR, sans-serif">기</text><text x="283.3" y="629.5" font-size="27" font-weight="350" fill="#111" textLength="26.6" lengthAdjust="spacingAndGlyphs" font-family="Liberation Sans, Noto Sans CJK KR, sans-serif">관</text><text x="316.7" y="629.5" font-size="27" font-weight="350" fill="#111" font-family="Liberation Sans, Noto Sans CJK KR, sans-serif">:</text><text x="328.0" y="629.5" font-size="27" font-weight="350" fill="#111" textLength="26.6" lengthAdjust="spacingAndGlyphs" font-family="Liberation Sans, Noto Sans CJK KR, sans-serif">경</text><text x="359.4" y="629.5" font-size="27" font-weight="350" fill="#111" textLength="26.6" lengthAdjust="spacingAndGlyphs" font-family="Liberation Sans, Noto Sans CJK KR, sans-serif">기</text><text x="390.8" y="629.5" font-size="27" font-weight="350" fill="#111" textLength="26.6" lengthAdjust="spacingAndGlyphs" font-family="Liberation Sans, Noto Sans CJK KR, sans-serif">협</text><text x="422.2" y="629.5" font-size="27" font-weight="350" fill="#111" textLength="26.6" lengthAdjust="spacingAndGlyphs" font-family="Liberation Sans, Noto Sans CJK KR, sans-serif">의</text><text x="453.7" y="629.5" font-size="27" font-weight="350" fill="#111" textLength="26.6" lengthAdjust="spacingAndGlyphs" font-family="Liberation Sans, Noto Sans CJK KR, sans-serif">회</text><text x="487.1" y="629.5" font-size="27" font-weight="350" fill="#111" font-family="Liberation Sans, Noto Sans CJK KR, sans-serif">/</text><text x="498.4" y="629.5" font-size="27" font-weight="350" fill="#111" textLength="26.6" lengthAdjust="spacingAndGlyphs" font-family="Liberation Sans, Noto Sans CJK KR, sans-serif">나</text><text x="529.8" y="629.5" font-size="27" font-weight="350" fill="#111" textLength="26.6" lengthAdjust="spacingAndGlyphs" font-family="Liberation Sans, Noto Sans CJK KR, sans-serif">야</text><text x="561.2" y="629.5" font-size="27" font-weight="350" fill="#111" textLength="26.6" lengthAdjust="spacingAndGlyphs" font-family="Liberation Sans, Noto Sans CJK KR, sans-serif">장</text><text x="592.6" y="629.5" font-size="27" font-weight="350" fill="#111" textLength="26.6" lengthAdjust="spacingAndGlyphs" font-family="Liberation Sans, Noto Sans CJK KR, sans-serif">애</text><text x="624.1" y="629.5" font-size="27" font-weight="350" fill="#111" textLength="26.6" lengthAdjust="spacingAndGlyphs" font-family="Liberation Sans, Noto Sans CJK KR, sans-serif">인</text><text x="655.5" y="629.5" font-size="27" font-weight="350" fill="#111" textLength="26.6" lengthAdjust="spacingAndGlyphs" font-family="Liberation Sans, Noto Sans CJK KR, sans-serif">권</text><text x="686.9" y="629.5" font-size="27" font-weight="350" fill="#111" textLength="26.6" lengthAdjust="spacingAndGlyphs" font-family="Liberation Sans, Noto Sans CJK KR, sans-serif">교</text><text x="718.3" y="629.5" font-size="27" font-weight="350" fill="#111" textLength="26.6" lengthAdjust="spacingAndGlyphs" font-family="Liberation Sans, Noto Sans CJK KR, sans-serif">육</text><text x="749.7" y="629.5" font-size="27" font-weight="350" fill="#111" textLength="26.6" lengthAdjust="spacingAndGlyphs" font-family="Liberation Sans, Noto Sans CJK KR, sans-serif">센</text><text x="781.2" y="629.5" font-size="27" font-weight="350" fill="#111" textLength="26.6" lengthAdjust="spacingAndGlyphs" font-family="Liberation Sans, Noto Sans CJK KR, sans-serif">터</text><text x="814.6" y="629.5" font-size="27" font-weight="350" fill="#111" font-family="Liberation Sans, Noto Sans CJK KR, sans-serif">/</text><text x="825.9" y="629.5" font-size="27" font-weight="350" fill="#111" textLength="26.6" lengthAdjust="spacingAndGlyphs" font-family="Liberation Sans, Noto Sans CJK KR, sans-serif">대</text><text x="857.3" y="629.5" font-size="27" font-weight="350" fill="#111" textLength="26.6" lengthAdjust="spacingAndGlyphs" font-family="Liberation Sans, Noto Sans CJK KR, sans-serif">구</text><text x="888.7" y="629.5" font-size="27" font-weight="350" fill="#111" textLength="26.6" lengthAdjust="spacingAndGlyphs" font-family="Liberation Sans, Noto Sans CJK KR, sans-serif">사</text><text x="920.1" y="629.5" font-size="27" font-weight="350" fill="#111" textLength="26.6" lengthAdjust="spacingAndGlyphs" font-family="Liberation Sans, Noto Sans CJK KR, sans-serif">람</text><text x="951.6" y="629.5" font-size="27" font-weight="350" fill="#111" textLength="26.6" lengthAdjust="spacingAndGlyphs" font-family="Liberation Sans, Noto Sans CJK KR, sans-serif">장</text><text x="983.0" y="629.5" font-size="27" font-weight="350" fill="#111" textLength="26.6" lengthAdjust="spacingAndGlyphs" font-family="Liberation Sans, Noto Sans CJK KR, sans-serif">애</text><text x="1014.4" y="629.5" font-size="27" font-weight="350" fill="#111" textLength="26.6" lengthAdjust="spacingAndGlyphs" font-family="Liberation Sans, Noto Sans CJK KR, sans-serif">인</text><text x="1045.8" y="629.5" font-size="27" font-weight="350" fill="#111" textLength="26.6" lengthAdjust="spacingAndGlyphs" font-family="Liberation Sans, Noto Sans CJK KR, sans-serif">자</text><text x="1077.2" y="629.5" font-size="27" font-weight="350" fill="#111" textLength="26.6" lengthAdjust="spacingAndGlyphs" font-family="Liberation Sans, Noto Sans CJK KR, sans-serif">립</text><text x="201" y="850.5" font-size="27" font-weight="350" fill="#111" font-family="Liberation Sans, Noto Sans CJK KR, sans-serif">-</text><rect x="160.500" y="520.5" width="21.500" height="21.500" fill="none" stroke="#111" stroke-width="1.600"/><rect x="160.500" y="564.5" width="21.500" height="21.500" fill="none" stroke="#111" stroke-width="1.600"/><rect x="160.500" y="608.5" width="21.500" height="21.500" fill="none" stroke="#111" stroke-width="1.600"/><rect x="160.500" y="696.5" width="21.500" height="21.500" fill="none" stroke="#111" stroke-width="1.600"/><rect x="160.500" y="784.5" width="21.500" height="21.500" fill="none" stroke="#111" stroke-width="1.600"/><path d="M377.0 412.5H486.0" stroke="#dfa868" stroke-width="1" stroke-dasharray="1 1" opacity=".8"/><path d="M881.0 412.5H1028.0" stroke="#dfa868" stroke-width="1" stroke-dasharray="1 1" opacity=".8"/><path d="M655.0 589.5H736.0" stroke="#dfa868" stroke-width="1" stroke-dasharray="1 1" opacity=".8"/><path d="M190.0 633.5H480.0" stroke="#dfa868" stroke-width="1" stroke-dasharray="1 1" opacity=".8"/><path d="M494.0 633.5H806.0" stroke="#dfa868" stroke-width="1" stroke-dasharray="1 1" opacity=".8"/><path d="M363.0 677.5H664.0" stroke="#dfa868" stroke-width="1" stroke-dasharray="1 1" opacity=".8"/><path d="M771 726h2.500M774.500 726h2.500M771 745h2.500M774.500 745h2.500M774 726.500v18" stroke="#555" stroke-width="1" fill="none"/></svg>
<div class="abs" style="left:1204px;top:281px;width:18px;height:591px;background:#dcdcdc"></div>
<div class="abs" style="left:1204px;top:281px;width:18px;height:11px;background:#f0f0f0;border:1px solid #ccc"></div>
<div class="abs" style="left:1207px;top:285px;width:12px;height:2px;background:#bbb"></div>
<div class="abs" style="left:1204px;top:291px;width:18px;height:18px;background:#f6f6f6;border:1px solid #ccc"></div>
<div class="abs" style="left:1209px;top:297px;border:4px solid transparent;border-bottom:5px solid #666;border-top:0"></div>
<div class="abs" style="left:1204px;top:321px;width:18px;height:78px;background:#f2f2f2;border:1px solid #c8c8c8"></div>
<div class="abs" style="left:1206px;top:356px;width:14px;height:1px;background:#666;box-shadow:0 2px 0 #666,0 4px 0 #666"></div>
<div class="abs" style="left:1204px;top:776px;width:18px;height:18px;background:#f6f6f6;border:1px solid #ccc"></div>
<div class="abs" style="left:1209px;top:783px;border:4px solid transparent;border-top:5px solid #666;border-bottom:0"></div>
<div class="abs" style="left:1204px;top:794px;width:18px;height:24px;background:#f6f6f6;border:1px solid #ccc"></div>
<div class="abs" style="left:1208px;top:797px;width:10px;height:18px;border:1px solid #888;background:#fff"></div><div class="abs" style="left:1211px;top:800px;width:4px;height:12px;border:1px solid #999"></div>
<div class="abs" style="left:1204px;top:820px;width:18px;height:52px;background:#f6f6f6;border:1px solid #ccc"></div>
<svg class="abs" style="left:1209px;top:827px" width="8" height="36" viewBox="0 0 8 36"><path d="M1 4l3-3 3 3zM1 10l3-3 3 3zM1 26l3 3 3-3zM1 32l3 3 3-3z" fill="#666"/><path d="M0 18h8" stroke="#ccc"/></svg>
<div class="abs" style="left:1222px;top:281px;width:10px;height:608px;background:#f4f4f4;border-left:1px solid #c4c4c4"></div>
<div class="abs" style="left:1222px;top:538px;width:8px;height:95px;background:#b8b8b8"></div>
<div class="abs" style="left:1224px;top:581px;border:3px solid transparent;border-left:4px solid #fff;border-right:0"></div>
<div class="abs" style="left:1232px;top:281px;width:34px;height:608px;background:#dedede;border-left:1px solid #c8c8c8"></div>
<svg class="abs" style="left:1237px;top:286px" width="24" height="25" viewBox="0 0 24 25"><path d="M2 5v14M5 4v16M8 3v18" stroke="#6f9bd1" stroke-width="1.500"/><path d="M11 2l7 0 5 4v12l-5 4h-7z" fill="#e8eef6" stroke="#6f9bd1" stroke-width="1.300"/><rect x="14" y="8" width="6" height="5" fill="#6f9bd1"/></svg>
<svg class="abs" style="left:1237px;top:319px" width="24" height="25" viewBox="0 0 24 25"><circle cx="4" cy="5" r="2" fill="#6f9bd1"/><circle cx="4" cy="12" r="2" fill="#6f9bd1"/><circle cx="4" cy="19" r="2" fill="#6f9bd1"/><path d="M9 5h13M9 12h13M9 19h13" stroke="#c4c4c4" stroke-width="1.300"/></svg>
<svg class="abs" style="left:1237px;top:353px" width="24" height="25" viewBox="0 0 24 25"><path d="M10 2h10l-5 8h6L7 23l3-10H5z" fill="#eef3f9" stroke="#6f9bd1" stroke-width="1.300"/></svg>
<svg class="abs" style="left:1237px;top:386px" width="24" height="25" viewBox="0 0 24 25"><rect x="5" y="2" width="14" height="16" fill="#f4f7fb" stroke="#6f9bd1" stroke-width="1.300"/><path d="M8 6h8M8 9h8M8 12h8" stroke="#6f9bd1" stroke-width="1"/><path d="M5 23v-3h14v3" fill="none" stroke="#6f9bd1" stroke-width="1.300"/></svg>
<svg class="abs" style="left:1237px;top:420px" width="24" height="25" viewBox="0 0 24 25"><rect x="4" y="4" width="16" height="19" fill="#f4f7fb" stroke="#6f9bd1" stroke-width="1.300"/><rect x="9" y="1.500" width="6" height="4" fill="#6f9bd1"/><path d="M7 10h2M11 10h6M7 14h2M11 14h6M7 18h2M11 18h6" stroke="#6f9bd1" stroke-width="1.200"/></svg>
<svg class="abs" style="left:1237px;top:453px" width="24" height="25" viewBox="0 0 24 25"><rect x="3" y="4" width="18" height="16" fill="#f4f7fb" stroke="#6f9bd1" stroke-width="1.500"/><path d="M10 8l6 4-6 4z" fill="#3f7bc0"/></svg>
<svg class="abs" style="left:1237px;top:487px" width="24" height="25" viewBox="0 0 24 25"><text x="1" y="12" font-size="13" font-weight="bold" fill="#6f9bd1" font-family="Liberation Sans, sans-serif">A</text><path d="M12 4h10M12 8h10M2 15h10M2 19h10M2 23h10" stroke="#999" stroke-width="1.300"/><text x="13" y="24" font-size="11" font-weight="bold" font-style="italic" fill="#888" font-family="Liberation Sans, sans-serif">A</text></svg>
<svg class="abs" style="left:1237px;top:520px" width="24" height="25" viewBox="0 0 24 25"><rect x="4" y="2" width="16" height="20" fill="#f4f7fb" stroke="#6f9bd1" stroke-width="1.500"/><path d="M12 2h6v9l-3-2.500-3 2.500z" fill="#3f7bc0"/></svg>
<svg class="abs" style="left:1237px;top:554px" width="24" height="25" viewBox="0 0 24 25"><circle cx="12" cy="8" r="5.500" fill="#eef3f9" stroke="#6f9bd1" stroke-width="1.500"/><path d="M3 23c0-7 4-9 9-9s9 2 9 9z" fill="#eef3f9" stroke="#6f9bd1" stroke-width="1.500"/><circle cx="5" cy="9" r="3" fill="#bbb"/><circle cx="20" cy="9" r="3" fill="#bbb"/></svg>
<div class="abs" style="left:6px;top:872px;width:1216px;height:18px;background:#e2e2e2;border-top:1px solid #d0d0d0"></div>
<div class="abs" style="left:11px;top:874px;width:1px;height:14px;background:#bbb;box-shadow:3px 0 0 #bbb"></div>
<div class="abs" style="left:19px;top:873px;width:36px;height:16px;background:#d4d4d4"></div>
<div class="abs" style="left:55px;top:873px;width:173px;height:17px;background:#fff;border-bottom:1.500px solid #4a7fc0"></div>
<div class="abs" style="left:60px;top:872px;font-size:13.4px;line-height:16px;color:#555;white-space:nowrap;letter-spacing:-0.1px">2025년_직장내장애인인식...</div>
<div class="abs" style="left:230px;top:873px;width:42px;height:16px;background:#b4b4b4"></div>
<div class="abs" style="left:246px;top:871px;font-size:14px;line-height:18px;color:#555;font-weight:bold">+</div>
<div class="abs" style="left:614px;top:872px;width:590px;height:18px;background:#f0f0f0;border:1px solid #d0d0d0"></div>
<div class="abs" style="left:614px;top:872px;width:18px;height:18px;background:#f6f6f6;border:1px solid #ccc"></div>
<div class="abs" style="left:620px;top:877px;border:4px solid transparent;border-right:5px solid #444;border-left:0"></div>
<div class="abs" style="left:1187px;top:872px;width:18px;height:18px;background:#f6f6f6;border:1px solid #ccc"></div>
<div class="abs" style="left:1194px;top:877px;border:4px solid transparent;border-left:5px solid #444;border-right:0"></div>
<div class="abs" style="left:1173px;top:873px;width:14px;height:16px;background:#dcdcdc"></div>
<div class="abs" style="left:900px;top:875px;width:1px;height:12px;background:#888;box-shadow:2px 0 0 #888,4px 0 0 #888"></div>
<div class="abs" style="left:1204px;top:872px;width:18px;height:18px;background:#dcdcdc"></div>
<div class="abs" style="left:6px;top:890px;width:1260px;height:23px;background:#f0f0f0;border-top:1px solid #d4d4d4"></div>
<div class="abs hw-st" style="left:52px;top:893px">2쪽</div>
<div class="abs hw-st" style="left:111px;top:893px">1단</div>
<div class="abs hw-st" style="left:164px;top:893px">5줄</div>
<div class="abs hw-st" style="left:216px;top:893px">1칸</div>
<div class="abs hw-st" style="left:266px;top:893px">문단 나눔</div>
<div class="abs hw-st" style="left:371px;top:893px">1/1 구역</div>
<div class="abs hw-st" style="left:466px;top:893px">삽입</div>
<div class="abs hw-st" style="left:528px;top:893px;color:#9bbad8;letter-spacing:0.9px">변경 내용 [기록 중지]</div>
<div class="abs" style="left:152px;top:891px;width:1px;height:21px;background:#d8d8d8"></div>
<div class="abs" style="left:255px;top:891px;width:1px;height:21px;background:#d8d8d8"></div>
<div class="abs" style="left:359px;top:891px;width:1px;height:21px;background:#d8d8d8"></div>
<div class="abs" style="left:455px;top:891px;width:1px;height:21px;background:#d8d8d8"></div>
<div class="abs" style="left:515px;top:891px;width:1px;height:21px;background:#d8d8d8"></div>
<div class="abs" style="left:664px;top:891px;width:1px;height:21px;background:#d8d8d8"></div>
<svg class="abs" style="left:964px;top:893px" width="82" height="17" viewBox="0 0 82 17"><rect x="1" y="1.500" width="14" height="13" fill="#fff" stroke="#777" stroke-width="1.200"/><rect x="4" y="4.500" width="8" height="7" fill="none" stroke="#777" stroke-width="1"/><rect x="20.500" y="0.500" width="18" height="16" fill="#eaf1fb" stroke="#9dbce4"/><rect x="24" y="2.500" width="11" height="12" fill="#fff" stroke="#888" stroke-width="1.200"/><rect x="26.500" y="5" width="6" height="7" fill="none" stroke="#999" stroke-width="1"/><path d="M45 3h13M45 6h13M45 9h13M45 12h13M45 15h13" stroke="#777" stroke-width="1"/><path d="M45 2v13M58 2v13" stroke="#777" stroke-width="1"/><rect x="68" y="1.500" width="10" height="13" fill="#fff" stroke="#777" stroke-width="1.100"/><path d="M70 5h6M70 8h6M70 11h6" stroke="#888" stroke-width=".9"/></svg>
<svg class="abs" style="left:1098px;top:892px" width="19" height="19" viewBox="0 0 19 19"><circle cx="8" cy="8" r="6" fill="#fff" stroke="#666" stroke-width="1.600"/><path d="M12.500 12.500l5 5" stroke="#666" stroke-width="2"/></svg>
<div class="abs" style="left:1120px;top:892px;width:82px;height:18px;background:#fff;border:1px solid #dcdcdc"></div>
<div class="abs hw-st" style="left:1123px;top:893px;color:#777">140%</div>
<div class="abs" style="left:1192px;top:900px;border:3px solid transparent;border-top:3px solid #444;border-bottom:0"></div>
<svg class="abs" style="left:1207px;top:894px" width="34" height="14" viewBox="0 0 34 14"><circle cx="7" cy="7" r="5.500" fill="#fff" stroke="#666" stroke-width="1.200"/><path d="M4 7h6" stroke="#666" stroke-width="1.600"/><circle cx="26" cy="7" r="5.500" fill="#fff" stroke="#666" stroke-width="1.200"/><path d="M23 7h6M26 4v6" stroke="#666" stroke-width="1.600"/></svg>
</div></div>
<svg class="abs" style="left:1287px;top:223px" width="304" height="170" viewBox="0 0 304 170"><defs><clipPath id="c1"><path d="M8 0h288a8 8 0 0 1 8 8v162H0V8a8 8 0 0 1 8-8z"/></clipPath><filter id="b1" x="-10%" y="-10%" width="120%" height="120%"><feGaussianBlur stdDeviation="1.300"/></filter><filter id="b3" x="-20%" y="-20%" width="140%" height="140%"><feGaussianBlur stdDeviation="3"/></filter><radialGradient id="f1" cx="0.5" cy="0.42" r="0.62"><stop offset="0" stop-color="#d9ab94"/><stop offset=".55" stop-color="#c99a83"/><stop offset="1" stop-color="#a87a66"/></radialGradient><linearGradient id="h1" x1="0" y1="0" x2="0" y2="1"><stop offset="0" stop-color="#4a3630"/><stop offset=".35" stop-color="#33241f"/><stop offset="1" stop-color="#2a1d1a"/></linearGradient></defs><g clip-path="url(#c1)"><rect width="304" height="170" fill="#c2bab2"/><rect x="127" y="0" width="177" height="74" fill="#e4e3e6"/><g filter="url(#b1)"><rect x="175" y="6" width="129" height="10" fill="#fbfbfd"/><rect x="175" y="22" width="129" height="9" fill="#f6f6f8"/><rect x="200" y="38" width="104" height="9" fill="#f3f3f5"/><rect x="215" y="52" width="89" height="9" fill="#efeff1"/><rect x="215" y="64" width="89" height="7" fill="#ddd"/><path d="M127 0h50l-4 30-14 14-10-8-8-14z" fill="#d2d3d8"/><path d="M290 0h14v30c-3-14-8-24-14-30z" fill="#cfcac4"/></g><g stroke="#5a5560" stroke-width="1" fill="none"><path d="M217 30h11M219 30v7M226 30v7M232 30h11M234 30v7M241 30v7M247 30h11M249 30v7M256 30v7"/></g><path d="M222 19c2 3 3 5 0 8-3-3-2-5 0-8z" fill="#555"/><path d="M249 26h7l-1.500-5-2 2-2-2z" fill="#4a5a48"/><rect x="228" y="74" width="76" height="16" fill="#9c5a36"/><rect x="228" y="72" width="76" height="3" fill="#c9c4bd"/><rect x="228" y="90" width="76" height="80" fill="#c6beb6"/><rect x="0" y="0" width="127" height="170" fill="#8d7d6e"/><g filter="url(#b1)"><rect x="0" y="0" width="56" height="13" fill="#b9bcc6"/><rect x="61" y="0" width="64" height="13" fill="#b5b2ad"/><rect x="61" y="0" width="17" height="12" fill="#d9532d"/><rect x="80" y="0" width="20" height="12" fill="#9fb4c4"/><rect x="100" y="1" width="18" height="11" fill="#b49a78"/><rect x="0" y="17" width="56" height="39" fill="#a9a6ad"/><path d="M0 56l0-38h5l-0 38z" fill="#d7d9de"/><path d="M5 56l0-38h5l-0 38z" fill="#b8a6b8"/><path d="M10 56l3-38h5l-3 38z" fill="#c9ccd4"/><path d="M15 56l3-38h5l-3 38z" fill="#8f86a8"/><path d="M20 56l3-38h5l-3 38z" fill="#e6e6e8"/><path d="M25 56l3-38h5l-3 38z" fill="#a89098"/><path d="M30 56l3-38h5l-3 38z" fill="#dcdde2"/><path d="M35 56l3-38h5l-3 38z" fill="#c48aa0"/><path d="M40 56l3-38h5l-3 38z" fill="#e9e9ea"/><path d="M45 56l3-38h5l-3 38z" fill="#bdbfc8"/><path d="M50 56l3-38h5l-3 38z" fill="#d8d2cc"/><rect x="63" y="17" width="62" height="39" fill="#c8ccd4"/><rect x="64" y="19" width="5" height="37" fill="#e8eaee"/><rect x="69" y="20" width="5" height="36" fill="#cfd6e0"/><rect x="74" y="21" width="5" height="35" fill="#a9b8cc"/><rect x="79" y="19" width="5" height="37" fill="#e4e6ea"/><rect x="84" y="20" width="5" height="36" fill="#d9c9c9"/><rect x="89" y="21" width="5" height="35" fill="#7f9cc4"/><rect x="94" y="19" width="5" height="37" fill="#dfe3ea"/><rect x="99" y="20" width="5" height="36" fill="#f0f0f2"/><rect x="104" y="21" width="5" height="35" fill="#b8c4d4"/><rect x="109" y="19" width="5" height="37" fill="#e9e9ec"/><rect x="114" y="20" width="5" height="36" fill="#c4ccd8"/><rect x="119" y="21" width="5" height="35" fill="#eceef2"/><rect x="0" y="61" width="56" height="36" fill="#9fa3ad"/><rect x="1" y="63" width="5" height="34" fill="#6e6a72"/><rect x="6" y="64" width="5" height="33" fill="#d7d9de"/><rect x="11" y="63" width="5" height="34" fill="#c4d0dc"/><rect x="16" y="64" width="5" height="33" fill="#e8e8ea"/><rect x="21" y="63" width="5" height="34" fill="#5f77a8"/><rect x="26" y="64" width="5" height="33" fill="#dfe1e6"/><rect x="31" y="63" width="5" height="34" fill="#b9c6d6"/><rect x="36" y="64" width="5" height="33" fill="#e9e9ea"/><rect x="41" y="63" width="5" height="34" fill="#d0d4dc"/><rect x="46" y="64" width="5" height="33" fill="#f0f0f0"/><rect x="51" y="63" width="5" height="34" fill="#e4e4e8"/><rect x="63" y="61" width="62" height="36" fill="#7d7470"/><rect x="64" y="66" width="26" height="6" fill="#e4e4e4"/><rect x="65" y="73" width="24" height="6" fill="#9fc4d0"/><rect x="65" y="79" width="24" height="7" fill="#7fb0c0"/><rect x="63" y="87" width="27" height="10" fill="#d8c9a0"/><rect x="92" y="66" width="4" height="31" fill="#e8e0c8"/><rect x="96" y="68" width="4" height="29" fill="#d8d2c0"/><rect x="100" y="70" width="4" height="27" fill="#8a4a5a"/><rect x="104" y="66" width="4" height="31" fill="#c9c9cf"/><rect x="108" y="68" width="4" height="29" fill="#6a4a6a"/><rect x="112" y="70" width="4" height="27" fill="#e0e0e4"/><rect x="116" y="66" width="4" height="31" fill="#b04a50"/><rect x="120" y="68" width="4" height="29" fill="#d9d9dd"/><rect x="0" y="102" width="56" height="68" fill="#8a8078"/><rect x="0" y="112" width="28" height="14" rx="3" fill="#c9ccd4"/><rect x="28" y="106" width="28" height="22" rx="3" fill="#e9e9ec"/><rect x="0" y="131" width="46" height="39" fill="#a8623c"/><rect x="2" y="134" width="12" height="4" fill="#e8d8c8"/><rect x="17" y="134" width="12" height="4" fill="#e8d8c8"/><rect x="32" y="134" width="12" height="4" fill="#e8d8c8"/><rect x="2" y="143" width="12" height="4" fill="#e8d8c8"/><rect x="17" y="143" width="12" height="4" fill="#e8d8c8"/><rect x="32" y="143" width="12" height="4" fill="#e8d8c8"/><rect x="2" y="152" width="12" height="4" fill="#e8d8c8"/><rect x="17" y="152" width="12" height="4" fill="#e8d8c8"/><rect x="32" y="152" width="12" height="4" fill="#e8d8c8"/><rect x="2" y="161" width="12" height="4" fill="#e8d8c8"/><rect x="17" y="161" width="12" height="4" fill="#e8d8c8"/><rect x="32" y="161" width="12" height="4" fill="#e8d8c8"/><rect x="63" y="102" width="62" height="36" fill="#5d6578"/><path d="M68 104h12c2 12 3 24 8 34H70c-3-10-3-22-2-34z" fill="#e4e6ea"/><path d="M84 106l12-2 4 34H90z" fill="#dfe2e8"/><path d="M98 104l8 0-8 34h-6z" fill="#3f5aa0"/><path d="M108 104h6l-10 34h-5z" fill="#c8586a"/><rect x="63" y="143" width="62" height="27" fill="#6b6058"/><rect x="76" y="150" width="20" height="10" fill="#8fa0a8"/><rect x="56" y="0" width="6" height="170" fill="#8f7e6e"/><rect x="0" y="13" width="127" height="4" fill="#8a7866"/><rect x="0" y="56" width="127" height="5" fill="#8a7866"/><rect x="0" y="97" width="127" height="5" fill="#8a7866"/><rect x="63" y="138" width="64" height="5" fill="#8a7866"/><rect x="124" y="0" width="4" height="170" fill="#a08c78"/><rect x="0" y="0" width="128" height="170" fill="#4a3c38" opacity=".22"/></g><g filter="url(#b1)"><path d="M96 170c6-18 20-24 36-28l100 0c24 6 40 14 52 28z" fill="#3b3136"/><path d="M178 27c-26-2-44 14-50 42-4 22-10 42-16 60-4 12 0 22 10 26l26 8 74 0 22-10c8-6 8-16 4-30-6-20-8-40-14-58-8-24-28-38-56-38z" fill="url(#h1)"/><g filter="url(#b3)"><path d="M176 30c-16 6-30 20-38 44M182 30c14 6 28 18 36 40" stroke="#5a4238" stroke-width="4" fill="none" opacity=".7"/></g><path d="M146 84c2-22 18-30 36-30 22 0 38 10 40 34 2 18 0 36-8 52-6 12-12 20-20 30h-36c-6-10-10-22-12-34-2-16-2-36 0-52z" fill="url(#f1)"/><path d="M150 64c10-8 24-10 36-8 14 2 26 8 34 22l2-14c-10-18-30-26-46-24-14 2-24 10-26 24z" fill="#33231f"/><g filter="url(#b3)"><ellipse cx="150" cy="132" rx="9" ry="12" fill="#b88470" opacity=".6"/><ellipse cx="210" cy="130" rx="9" ry="12" fill="#b88470" opacity=".6"/><ellipse cx="178" cy="122" rx="7" ry="9" fill="#e0b49c" opacity=".7"/></g><path d="M170 124c2 4 5 5 8 5s6-1 8-5" stroke="#a8745f" stroke-width="1.500" fill="none"/><path d="M164 146c8-4 20-4 28 0-6 5-22 5-28 0z" fill="#b8736c"/><path d="M164 146c8 1 20 1 28 0" stroke="#96584f" stroke-width="1" fill="none"/></g><g fill="none" stroke="#3d2a24" stroke-width="3"><rect x="137" y="98" width="38" height="24" rx="10"/><rect x="183" y="96" width="37" height="24" rx="10"/><path d="M175 106c3-2 5-2 8 0" stroke-width="2.500"/><path d="M137 102l-5-4M220 100l6-4" stroke-width="2.500"/></g><ellipse cx="157" cy="110" rx="5" ry="1.800" fill="#3a2622"/><ellipse cx="201" cy="108" rx="5" ry="1.800" fill="#3a2622"/><path d="M146 102c6-2 14-2 20 0M190 100c6-2 14-2 20 0" stroke="#6a4a3c" stroke-width="1.600" fill="none" opacity=".7"/></g></svg><div class="vlab" style="left:1288px;top:373px;width:163px;background:rgba(40,38,36,.78)"></div><svg class="abs" style="left:1294px;top:376px" width="12" height="14" viewBox="0 0 12 14"><rect x="3.800" y="1" width="4.400" height="7.500" rx="2.200" fill="#e0323c"/><path d="M2 7c0 2.500 1.800 4 4 4s4-1.500 4-4M6 11v2" fill="none" stroke="#e0323c" stroke-width="1.200"/><path d="M1 13L11 1" stroke="#e0323c" stroke-width="1.500"/></svg><svg class="abs" style="left:1312px;top:375px" width="12" height="15" viewBox="0 0 12 15"><path d="M3 1h6v1.500L8 3.500v3.500l2.500 2.500v1h-9v-1L4 7V3.500L3 2.500zM6 10.500v4" fill="#fff" stroke="#fff" stroke-width=".8"/></svg><div class="abs" style="left:1330px;top:372px;font-size:13.5px;line-height:18px;color:#fff;white-space:nowrap;letter-spacing:0.5px;text-shadow:0 0 2px #000">진해장애인인권센터</div><svg class="abs" style="left:1286px;top:393px" width="306" height="173" viewBox="0 0 306 173"><defs><clipPath id="c2"><path d="M2 2h302v161a8 8 0 0 1-8 8H10a8 8 0 0 1-8-8z"/></clipPath><filter id="g2" x="-20%" y="-20%" width="140%" height="140%"><feGaussianBlur stdDeviation="2.500"/></filter><filter id="g1" x="-10%" y="-10%" width="120%" height="120%"><feGaussianBlur stdDeviation="1"/></filter><radialGradient id="sp" cx="0.55" cy="0.75" r="0.8"><stop offset="0" stop-color="#24437f"/><stop offset=".5" stop-color="#162a5a"/><stop offset="1" stop-color="#0b1533"/></radialGradient><radialGradient id="f2" cx="0.45" cy="0.45" r="0.65"><stop offset="0" stop-color="#ecc0ac"/><stop offset=".6" stop-color="#dea894"/><stop offset="1" stop-color="#bd8672"/></radialGradient><linearGradient id="h2" x1="0" y1="0" x2="1" y2="1"><stop offset="0" stop-color="#86694f"/><stop offset="1" stop-color="#5c4736"/></linearGradient></defs><g clip-path="url(#c2)"><rect width="306" height="173" fill="url(#sp)"/><g filter="url(#g2)"><ellipse cx="60" cy="60" rx="50" ry="30" fill="#1c3163" opacity=".7"/><ellipse cx="250" cy="40" rx="50" ry="30" fill="#101d44" opacity=".8"/></g><circle cx="99.8" cy="21.3" r="0.9" fill="#cfdcff" opacity="0.43"/><circle cx="250.0" cy="14.0" r="0.7" fill="#cfdcff" opacity="0.43"/><circle cx="155.2" cy="6.8" r="0.6" fill="#cfdcff" opacity="0.65"/><circle cx="74.7" cy="72.5" r="0.4" fill="#cfdcff" opacity="0.90"/><circle cx="39.4" cy="30.6" r="0.9" fill="#cfdcff" opacity="0.75"/><circle cx="20.7" cy="76.9" r="0.4" fill="#cfdcff" opacity="0.99"/><circle cx="16.1" cy="111.9" r="0.5" fill="#cfdcff" opacity="0.65"/><circle cx="165.3" cy="75.1" r="0.7" fill="#cfdcff" opacity="0.89"/><circle cx="56.6" cy="76.4" r="0.9" fill="#cfdcff" opacity="0.51"/><circle cx="31.4" cy="93.2" r="0.7" fill="#cfdcff" opacity="0.44"/><circle cx="64.2" cy="89.1" r="0.6" fill="#cfdcff" opacity="0.87"/><circle cx="142.6" cy="120.2" r="0.5" fill="#cfdcff" opacity="0.58"/><circle cx="241.9" cy="91.5" r="0.5" fill="#cfdcff" opacity="0.45"/><circle cx="92.7" cy="65.4" r="0.5" fill="#cfdcff" opacity="0.84"/><circle cx="89.0" cy="127.5" r="0.4" fill="#cfdcff" opacity="0.71"/><circle cx="51.8" cy="45.8" r="0.6" fill="#cfdcff" opacity="0.65"/><circle cx="292.5" cy="11.9" r="0.7" fill="#cfdcff" opacity="0.74"/><circle cx="266.4" cy="42.2" r="0.9" fill="#cfdcff" opacity="0.61"/><circle cx="152.0" cy="104.0" r="0.4" fill="#cfdcff" opacity="0.90"/><circle cx="287.3" cy="62.7" r="0.9" fill="#cfdcff" opacity="0.44"/><circle cx="222.8" cy="41.6" r="0.7" fill="#cfdcff" opacity="1.00"/><circle cx="250.2" cy="38.4" r="0.6" fill="#cfdcff" opacity="0.93"/><circle cx="106.8" cy="122.4" r="0.5" fill="#cfdcff" opacity="0.50"/><circle cx="37.4" cy="9.5" r="0.5" fill="#cfdcff" opacity="0.48"/><circle cx="76.8" cy="52.0" r="0.6" fill="#cfdcff" opacity="0.45"/><circle cx="137.7" cy="72.3" r="0.5" fill="#cfdcff" opacity="0.89"/><circle cx="262.9" cy="37.6" r="0.6" fill="#cfdcff" opacity="0.99"/><circle cx="208.2" cy="50.7" r="0.5" fill="#cfdcff" opacity="0.49"/><circle cx="55.2" cy="31.7" r="0.5" fill="#cfdcff" opacity="0.41"/><circle cx="253.0" cy="25.3" r="0.5" fill="#cfdcff" opacity="0.40"/><circle cx="128.5" cy="49.3" r="0.7" fill="#cfdcff" opacity="0.59"/><circle cx="39.9" cy="112.0" r="0.7" fill="#cfdcff" opacity="0.79"/><circle cx="225.4" cy="60.5" r="0.9" fill="#cfdcff" opacity="0.88"/><circle cx="120.5" cy="53.1" r="0.4" fill="#cfdcff" opacity="0.69"/><circle cx="122.9" cy="26.4" r="0.5" fill="#cfdcff" opacity="0.66"/><circle cx="35.2" cy="78.9" r="0.4" fill="#cfdcff" opacity="0.40"/><circle cx="47.7" cy="15.0" r="0.5" fill="#cfdcff" opacity="0.77"/><circle cx="23.2" cy="28.6" r="0.6" fill="#cfdcff" opacity="0.49"/><circle cx="78.2" cy="46.5" r="0.5" fill="#cfdcff" opacity="0.68"/><circle cx="36.8" cy="64.5" r="0.6" fill="#cfdcff" opacity="0.69"/><circle cx="96.2" cy="20.4" r="0.9" fill="#cfdcff" opacity="0.61"/><circle cx="82.0" cy="108.1" r="0.5" fill="#cfdcff" opacity="0.71"/><circle cx="64.0" cy="123.9" r="0.5" fill="#cfdcff" opacity="0.49"/><circle cx="166.0" cy="5.5" r="0.7" fill="#cfdcff" opacity="0.58"/><circle cx="196.2" cy="13.6" r="0.5" fill="#cfdcff" opacity="0.71"/><circle cx="276.3" cy="47.5" r="0.5" fill="#cfdcff" opacity="0.72"/><circle cx="237.3" cy="44.2" r="0.5" fill="#cfdcff" opacity="0.77"/><circle cx="240.1" cy="99.1" r="0.5" fill="#cfdcff" opacity="0.88"/><circle cx="249.1" cy="96.7" r="0.5" fill="#cfdcff" opacity="0.52"/><circle cx="150.8" cy="95.6" r="0.4" fill="#cfdcff" opacity="0.87"/><circle cx="144.6" cy="26.8" r="0.7" fill="#cfdcff" opacity="0.97"/><circle cx="137.1" cy="121.9" r="0.5" fill="#cfdcff" opacity="0.97"/><circle cx="112.1" cy="30.2" r="0.5" fill="#cfdcff" opacity="0.68"/><circle cx="104.0" cy="63.8" r="0.7" fill="#cfdcff" opacity="0.90"/><circle cx="146.8" cy="85.6" r="0.9" fill="#cfdcff" opacity="0.45"/><circle cx="201.5" cy="118.5" r="0.9" fill="#cfdcff" opacity="0.85"/><circle cx="146.4" cy="24.9" r="0.9" fill="#cfdcff" opacity="0.60"/><circle cx="243.8" cy="126.4" r="0.6" fill="#cfdcff" opacity="0.68"/><circle cx="226.5" cy="12.9" r="0.5" fill="#cfdcff" opacity="0.50"/><circle cx="40.4" cy="21.3" r="0.6" fill="#cfdcff" opacity="0.88"/><circle cx="46.1" cy="107.8" r="0.6" fill="#cfdcff" opacity="0.79"/><circle cx="107.8" cy="72.2" r="0.5" fill="#cfdcff" opacity="0.41"/><circle cx="243.4" cy="95.0" r="0.4" fill="#cfdcff" opacity="0.72"/><circle cx="284.0" cy="57.5" r="0.5" fill="#cfdcff" opacity="0.90"/><circle cx="65.7" cy="34.2" r="0.5" fill="#cfdcff" opacity="0.70"/><circle cx="232.6" cy="43.7" r="0.7" fill="#cfdcff" opacity="0.65"/><circle cx="41.6" cy="118.5" r="0.5" fill="#cfdcff" opacity="0.94"/><circle cx="202.1" cy="106.3" r="0.7" fill="#cfdcff" opacity="0.65"/><circle cx="279.2" cy="66.2" r="0.7" fill="#cfdcff" opacity="0.49"/><circle cx="156.2" cy="113.7" r="0.5" fill="#cfdcff" opacity="0.77"/><circle cx="236.4" cy="21.2" r="0.5" fill="#cfdcff" opacity="0.68"/><circle cx="221.0" cy="73.2" r="0.5" fill="#cfdcff" opacity="0.81"/><circle cx="162.3" cy="63.8" r="0.4" fill="#cfdcff" opacity="0.93"/><circle cx="19.2" cy="26.5" r="0.4" fill="#cfdcff" opacity="0.86"/><circle cx="155.3" cy="73.9" r="0.4" fill="#cfdcff" opacity="0.67"/><circle cx="187.0" cy="66.7" r="0.7" fill="#cfdcff" opacity="0.52"/><circle cx="85.7" cy="67.0" r="0.6" fill="#cfdcff" opacity="0.70"/><circle cx="76.8" cy="69.0" r="0.5" fill="#cfdcff" opacity="0.95"/><circle cx="271.6" cy="27.9" r="0.6" fill="#cfdcff" opacity="0.48"/><circle cx="38.7" cy="58.6" r="0.4" fill="#cfdcff" opacity="0.80"/><circle cx="131.4" cy="29.2" r="0.5" fill="#cfdcff" opacity="0.87"/><circle cx="272.9" cy="21.8" r="0.9" fill="#cfdcff" opacity="0.79"/><circle cx="112.6" cy="34.4" r="0.5" fill="#cfdcff" opacity="0.98"/><circle cx="68.3" cy="123.9" r="0.6" fill="#cfdcff" opacity="0.93"/><circle cx="51.2" cy="87.5" r="0.5" fill="#cfdcff" opacity="0.50"/><circle cx="132.3" cy="68.0" r="0.5" fill="#cfdcff" opacity="0.65"/><circle cx="109.7" cy="13.8" r="0.5" fill="#cfdcff" opacity="0.41"/><circle cx="169.3" cy="58.4" r="0.4" fill="#cfdcff" opacity="0.63"/><circle cx="158.3" cy="39.8" r="0.4" fill="#cfdcff" opacity="0.47"/><circle cx="279.4" cy="31.3" r="0.4" fill="#cfdcff" opacity="0.45"/><circle cx="84.1" cy="118.0" r="0.5" fill="#cfdcff" opacity="0.56"/><circle cx="41.1" cy="56.0" r="0.9" fill="#cfdcff" opacity="0.89"/><circle cx="80.1" cy="21.1" r="0.7" fill="#cfdcff" opacity="0.74"/><circle cx="213.5" cy="13.5" r="0.4" fill="#cfdcff" opacity="0.88"/><circle cx="57.4" cy="116.6" r="0.5" fill="#cfdcff" opacity="0.96"/><circle cx="193.6" cy="104.6" r="0.4" fill="#cfdcff" opacity="0.76"/><circle cx="69.2" cy="35.8" r="0.4" fill="#cfdcff" opacity="0.67"/><circle cx="104.4" cy="72.8" r="0.5" fill="#cfdcff" opacity="0.77"/><circle cx="15.0" cy="92.8" r="0.4" fill="#cfdcff" opacity="0.98"/><circle cx="81.1" cy="25.2" r="0.5" fill="#cfdcff" opacity="0.78"/><circle cx="162.4" cy="28.4" r="0.6" fill="#cfdcff" opacity="0.70"/><circle cx="55.7" cy="46.4" r="0.4" fill="#cfdcff" opacity="1.00"/><circle cx="13.2" cy="4.4" r="0.7" fill="#cfdcff" opacity="0.73"/><circle cx="59.2" cy="62.8" r="0.6" fill="#cfdcff" opacity="0.46"/><circle cx="249.3" cy="57.3" r="0.6" fill="#cfdcff" opacity="0.73"/><circle cx="270.4" cy="126.2" r="0.5" fill="#cfdcff" opacity="0.81"/><circle cx="298.7" cy="45.9" r="0.9" fill="#cfdcff" opacity="0.84"/><circle cx="44.2" cy="128.6" r="0.4" fill="#cfdcff" opacity="0.90"/><circle cx="6.3" cy="82.1" r="0.5" fill="#cfdcff" opacity="0.66"/><circle cx="18.7" cy="87.1" r="0.6" fill="#cfdcff" opacity="0.92"/><circle cx="204.5" cy="38.1" r="0.5" fill="#cfdcff" opacity="0.82"/><circle cx="15.7" cy="25.7" r="0.5" fill="#cfdcff" opacity="0.67"/><circle cx="81.5" cy="125.1" r="0.7" fill="#cfdcff" opacity="0.59"/><circle cx="12.4" cy="114.9" r="0.5" fill="#cfdcff" opacity="0.61"/><circle cx="2.3" cy="50.8" r="0.6" fill="#cfdcff" opacity="0.57"/><circle cx="200.1" cy="33.8" r="0.4" fill="#cfdcff" opacity="0.45"/><circle cx="248.7" cy="20.4" r="0.7" fill="#cfdcff" opacity="0.43"/><circle cx="8.8" cy="40.9" r="0.5" fill="#cfdcff" opacity="0.45"/><circle cx="291.2" cy="111.2" r="0.5" fill="#cfdcff" opacity="0.79"/><circle cx="218.2" cy="114.5" r="0.6" fill="#cfdcff" opacity="0.86"/><circle cx="219.6" cy="65.3" r="0.5" fill="#cfdcff" opacity="0.83"/><circle cx="196.3" cy="7.6" r="0.9" fill="#cfdcff" opacity="0.94"/><circle cx="191.5" cy="95.9" r="0.7" fill="#cfdcff" opacity="0.48"/><circle cx="160.2" cy="66.6" r="0.4" fill="#cfdcff" opacity="0.90"/><circle cx="178.4" cy="116.3" r="0.9" fill="#cfdcff" opacity="0.97"/><circle cx="196.2" cy="12.9" r="0.4" fill="#cfdcff" opacity="0.48"/><circle cx="110.9" cy="15.4" r="0.6" fill="#cfdcff" opacity="0.74"/><circle cx="191.6" cy="82.2" r="0.9" fill="#cfdcff" opacity="0.55"/><circle cx="81.7" cy="60.5" r="0.4" fill="#cfdcff" opacity="0.85"/><circle cx="153.9" cy="70.5" r="0.9" fill="#cfdcff" opacity="0.72"/><circle cx="227.2" cy="62.7" r="0.4" fill="#cfdcff" opacity="0.91"/><circle cx="72.9" cy="98.8" r="0.5" fill="#cfdcff" opacity="0.84"/><circle cx="296.7" cy="65.2" r="0.6" fill="#cfdcff" opacity="0.45"/><circle cx="277.0" cy="38.8" r="0.4" fill="#cfdcff" opacity="0.77"/><circle cx="196.1" cy="11.9" r="0.5" fill="#cfdcff" opacity="0.60"/><circle cx="198.8" cy="90.7" r="0.7" fill="#cfdcff" opacity="0.74"/><circle cx="5.8" cy="9.8" r="0.5" fill="#cfdcff" opacity="0.98"/><circle cx="32.1" cy="29.9" r="0.6" fill="#cfdcff" opacity="0.57"/><circle cx="158.0" cy="61.5" r="0.6" fill="#cfdcff" opacity="0.86"/><circle cx="302.0" cy="72.3" r="0.5" fill="#cfdcff" opacity="0.99"/><circle cx="284.7" cy="4.2" r="0.6" fill="#cfdcff" opacity="0.45"/><circle cx="155.0" cy="129.3" r="0.5" fill="#cfdcff" opacity="0.63"/><circle cx="278.8" cy="121.1" r="0.4" fill="#cfdcff" opacity="0.75"/><circle cx="44.8" cy="69.1" r="0.5" fill="#cfdcff" opacity="0.48"/><circle cx="249.7" cy="67.1" r="0.4" fill="#cfdcff" opacity="0.82"/><circle cx="71.9" cy="116.9" r="0.6" fill="#cfdcff" opacity="0.64"/><circle cx="50.0" cy="123.6" r="0.9" fill="#cfdcff" opacity="0.67"/><circle cx="93.2" cy="20.0" r="0.5" fill="#cfdcff" opacity="0.63"/><circle cx="38.5" cy="44.4" r="0.5" fill="#cfdcff" opacity="0.85"/><circle cx="255.4" cy="17.4" r="0.5" fill="#cfdcff" opacity="0.83"/><circle cx="274.3" cy="39.1" r="0.5" fill="#cfdcff" opacity="0.44"/><circle cx="119.8" cy="113.4" r="0.4" fill="#cfdcff" opacity="0.62"/><circle cx="131.3" cy="37.2" r="0.4" fill="#cfdcff" opacity="0.57"/><circle cx="17.6" cy="86.7" r="0.9" fill="#cfdcff" opacity="0.96"/><circle cx="77.3" cy="36.0" r="0.7" fill="#cfdcff" opacity="0.59"/><circle cx="235.5" cy="102.5" r="0.6" fill="#cfdcff" opacity="0.93"/><circle cx="247.2" cy="82.8" r="0.7" fill="#cfdcff" opacity="0.73"/><circle cx="219.3" cy="8.3" r="0.9" fill="#cfdcff" opacity="0.65"/><circle cx="187.7" cy="19.7" r="0.5" fill="#cfdcff" opacity="0.69"/><circle cx="277.4" cy="72.4" r="0.5" fill="#cfdcff" opacity="0.68"/><circle cx="105.8" cy="40.1" r="0.9" fill="#cfdcff" opacity="0.84"/><circle cx="199.2" cy="54.0" r="0.5" fill="#cfdcff" opacity="0.58"/><circle cx="170.3" cy="52.5" r="0.5" fill="#cfdcff" opacity="0.79"/><circle cx="24.7" cy="66.1" r="0.6" fill="#cfdcff" opacity="0.73"/><circle cx="138.8" cy="44.6" r="0.6" fill="#cfdcff" opacity="0.66"/><circle cx="167.4" cy="33.2" r="0.5" fill="#cfdcff" opacity="0.61"/><circle cx="29.5" cy="32.6" r="0.5" fill="#cfdcff" opacity="0.89"/><circle cx="63.0" cy="4.6" r="0.6" fill="#cfdcff" opacity="0.63"/><circle cx="227.2" cy="28.9" r="0.5" fill="#cfdcff" opacity="0.60"/><circle cx="20.7" cy="37.5" r="0.5" fill="#cfdcff" opacity="0.48"/><circle cx="278" cy="75" r="1.800" fill="#fff"/><circle cx="278" cy="75" r="3.500" fill="#9fc0ff" opacity=".35"/><g filter="url(#g2)"><circle cx="211" cy="297" r="216" fill="#3f8fe8" opacity=".6"/></g><circle cx="211" cy="299" r="213.500" fill="#a9dcff"/><circle cx="211" cy="301.500" r="213.500" fill="#0c1730"/><g filter="url(#g2)"><path d="M60 150A213 213 0 0 1 304 112L304 122A205 205 0 0 0 70 158z" fill="#21488c" opacity=".75"/></g><circle cx="238.8" cy="138.1" r="0.8" fill="#e8c890" opacity="0.57"/><circle cx="286.8" cy="112.9" r="0.8" fill="#e8c890" opacity="0.68"/><circle cx="279.4" cy="106.4" r="0.6" fill="#e8c890" opacity="0.39"/><circle cx="249.1" cy="160.5" r="0.4" fill="#e8c890" opacity="0.66"/><circle cx="232.1" cy="130.8" r="0.5" fill="#e8c890" opacity="0.67"/><circle cx="284.0" cy="104.3" r="0.4" fill="#e8c890" opacity="0.41"/><circle cx="213.8" cy="102.0" r="0.8" fill="#e8c890" opacity="0.50"/><circle cx="255.3" cy="113.3" r="0.5" fill="#e8c890" opacity="0.68"/><circle cx="244.5" cy="145.0" r="0.8" fill="#e8c890" opacity="0.69"/><circle cx="233.4" cy="137.5" r="0.4" fill="#e8c890" opacity="0.72"/><circle cx="222.5" cy="115.6" r="0.6" fill="#e8c890" opacity="0.32"/><circle cx="252.0" cy="107.3" r="0.4" fill="#e8c890" opacity="0.81"/><circle cx="231.0" cy="165.1" r="0.4" fill="#e8c890" opacity="0.43"/><circle cx="295.3" cy="103.6" r="0.8" fill="#e8c890" opacity="0.89"/><circle cx="232.3" cy="105.0" r="0.5" fill="#e8c890" opacity="0.77"/><circle cx="217.1" cy="105.9" r="0.6" fill="#e8c890" opacity="0.31"/><circle cx="233.8" cy="162.8" r="0.5" fill="#e8c890" opacity="0.45"/><circle cx="197.0" cy="104.1" r="0.8" fill="#e8c890" opacity="0.41"/><circle cx="251.6" cy="130.4" r="0.5" fill="#e8c890" opacity="0.89"/><circle cx="276.6" cy="128.5" r="0.8" fill="#e8c890" opacity="0.37"/><circle cx="235.1" cy="114.5" r="0.6" fill="#e8c890" opacity="0.82"/><circle cx="301.0" cy="140.3" r="0.4" fill="#e8c890" opacity="0.43"/><circle cx="231.9" cy="158.1" r="0.4" fill="#e8c890" opacity="0.33"/><circle cx="202.4" cy="130.0" r="0.4" fill="#e8c890" opacity="0.76"/><circle cx="224.1" cy="120.2" r="0.4" fill="#e8c890" opacity="0.34"/><circle cx="209.8" cy="143.3" r="0.4" fill="#e8c890" opacity="0.66"/><circle cx="229.2" cy="130.8" r="0.8" fill="#e8c890" opacity="0.80"/><circle cx="201.2" cy="126.3" r="0.5" fill="#e8c890" opacity="0.49"/><circle cx="212.2" cy="141.5" r="0.5" fill="#e8c890" opacity="0.40"/><circle cx="259.8" cy="137.7" r="0.8" fill="#e8c890" opacity="0.83"/><circle cx="256.8" cy="128.7" r="0.4" fill="#e8c890" opacity="0.37"/><circle cx="246.0" cy="117.4" r="0.8" fill="#e8c890" opacity="0.45"/><circle cx="283.0" cy="140.6" r="0.6" fill="#e8c890" opacity="0.61"/><circle cx="295.6" cy="166.4" r="0.5" fill="#e8c890" opacity="0.44"/><circle cx="251.6" cy="158.0" r="0.4" fill="#e8c890" opacity="0.47"/><circle cx="294.2" cy="113.9" r="0.4" fill="#e8c890" opacity="0.34"/><circle cx="234.0" cy="116.9" r="0.4" fill="#e8c890" opacity="0.41"/><circle cx="228.9" cy="138.9" r="0.5" fill="#e8c890" opacity="0.36"/><circle cx="201.5" cy="130.6" r="0.6" fill="#e8c890" opacity="0.69"/><circle cx="267.3" cy="139.7" r="0.5" fill="#e8c890" opacity="0.65"/><circle cx="294.9" cy="132.3" r="0.6" fill="#e8c890" opacity="0.72"/><circle cx="299.6" cy="101.4" r="0.4" fill="#e8c890" opacity="0.59"/><circle cx="271.9" cy="121.7" r="0.4" fill="#e8c890" opacity="0.35"/><circle cx="250.0" cy="150.1" r="0.5" fill="#e8c890" opacity="0.78"/><circle cx="293.9" cy="123.9" r="0.8" fill="#e8c890" opacity="0.84"/><circle cx="288.7" cy="128.4" r="0.4" fill="#e8c890" opacity="0.82"/><circle cx="253.2" cy="142.5" r="0.8" fill="#e8c890" opacity="0.53"/><circle cx="186.5" cy="104.9" r="0.4" fill="#e8c890" opacity="0.68"/><circle cx="303.2" cy="159.8" r="0.6" fill="#e8c890" opacity="0.53"/><circle cx="272.5" cy="139.5" r="0.8" fill="#e8c890" opacity="0.58"/><circle cx="249.4" cy="135.3" r="0.4" fill="#e8c890" opacity="0.49"/><circle cx="195.4" cy="101.5" r="0.4" fill="#e8c890" opacity="0.60"/><circle cx="258.1" cy="162.6" r="0.6" fill="#e8c890" opacity="0.84"/><circle cx="228.8" cy="109.7" r="0.5" fill="#e8c890" opacity="0.61"/><circle cx="274.7" cy="123.3" r="0.8" fill="#e8c890" opacity="0.60"/><circle cx="213.7" cy="127.5" r="0.6" fill="#e8c890" opacity="0.42"/><circle cx="236.3" cy="154.8" r="0.5" fill="#e8c890" opacity="0.83"/><circle cx="230.7" cy="139.7" r="0.6" fill="#e8c890" opacity="0.43"/><circle cx="201.0" cy="123.9" r="0.4" fill="#e8c890" opacity="0.73"/><circle cx="298.1" cy="118.8" r="0.5" fill="#e8c890" opacity="0.37"/><circle cx="241.1" cy="162.9" r="0.8" fill="#e8c890" opacity="0.53"/><circle cx="246.9" cy="145.7" r="0.8" fill="#e8c890" opacity="0.49"/><circle cx="283.6" cy="118.9" r="0.4" fill="#e8c890" opacity="0.71"/><circle cx="218.4" cy="124.1" r="0.4" fill="#e8c890" opacity="0.68"/><circle cx="233.2" cy="112.9" r="0.6" fill="#e8c890" opacity="0.44"/><circle cx="201.8" cy="103.2" r="0.4" fill="#e8c890" opacity="0.57"/><circle cx="260.0" cy="144.5" r="0.6" fill="#e8c890" opacity="0.88"/><circle cx="266.5" cy="113.6" r="0.8" fill="#e8c890" opacity="0.45"/><circle cx="270.0" cy="151.3" r="0.4" fill="#e8c890" opacity="0.41"/><circle cx="217.4" cy="123.5" r="0.5" fill="#e8c890" opacity="0.54"/><circle cx="279.2" cy="161.6" r="0.4" fill="#e8c890" opacity="0.55"/><circle cx="291.2" cy="126.4" r="0.8" fill="#e8c890" opacity="0.57"/><circle cx="259.4" cy="161.9" r="0.8" fill="#e8c890" opacity="0.63"/><circle cx="262.7" cy="134.2" r="0.6" fill="#e8c890" opacity="0.58"/><circle cx="262.5" cy="113.9" r="0.4" fill="#e8c890" opacity="0.43"/><circle cx="292.1" cy="166.7" r="0.6" fill="#e8c890" opacity="0.62"/><circle cx="279.1" cy="121.8" r="0.4" fill="#e8c890" opacity="0.51"/><circle cx="194.8" cy="130.0" r="0.8" fill="#e8c890" opacity="0.76"/><circle cx="243.0" cy="101.9" r="0.4" fill="#e8c890" opacity="0.56"/><circle cx="189.2" cy="136.3" r="0.5" fill="#e8c890" opacity="0.58"/><circle cx="304.0" cy="161.2" r="0.8" fill="#e8c890" opacity="0.87"/><circle cx="243.6" cy="164.5" r="0.4" fill="#e8c890" opacity="0.75"/><circle cx="237.3" cy="138.0" r="0.5" fill="#e8c890" opacity="0.61"/><circle cx="285.4" cy="138.1" r="0.6" fill="#e8c890" opacity="0.70"/><circle cx="298.6" cy="159.2" r="0.5" fill="#e8c890" opacity="0.48"/><circle cx="201.8" cy="137.0" r="0.6" fill="#e8c890" opacity="0.64"/><circle cx="208.9" cy="136.4" r="0.4" fill="#e8c890" opacity="0.66"/><circle cx="188.3" cy="165.9" r="0.8" fill="#e8c890" opacity="0.63"/><circle cx="302.7" cy="108.3" r="0.4" fill="#e8c890" opacity="0.71"/><circle cx="192.8" cy="136.6" r="0.8" fill="#e8c890" opacity="0.85"/><circle cx="280.2" cy="127.5" r="0.5" fill="#e8c890" opacity="0.58"/><circle cx="200.1" cy="129.5" r="0.8" fill="#e8c890" opacity="0.61"/><circle cx="197.9" cy="128.5" r="0.4" fill="#e8c890" opacity="0.86"/><circle cx="200.4" cy="153.0" r="0.4" fill="#e8c890" opacity="0.32"/><circle cx="203.5" cy="100.8" r="0.6" fill="#e8c890" opacity="0.49"/><circle cx="227.3" cy="142.1" r="0.4" fill="#e8c890" opacity="0.60"/><circle cx="254.3" cy="157.9" r="0.6" fill="#e8c890" opacity="0.73"/><circle cx="268.5" cy="159.8" r="0.4" fill="#e8c890" opacity="0.53"/><circle cx="234.2" cy="136.0" r="0.5" fill="#e8c890" opacity="0.62"/><circle cx="287.8" cy="136.3" r="0.5" fill="#e8c890" opacity="0.62"/><circle cx="286.3" cy="141.6" r="0.5" fill="#e8c890" opacity="0.44"/><circle cx="273.2" cy="155.1" r="0.5" fill="#e8c890" opacity="0.49"/><circle cx="222.5" cy="162.7" r="0.5" fill="#e8c890" opacity="0.77"/><circle cx="208.2" cy="106.6" r="0.5" fill="#e8c890" opacity="0.38"/><circle cx="195.5" cy="126.4" r="0.8" fill="#e8c890" opacity="0.80"/><circle cx="235.2" cy="153.7" r="0.5" fill="#e8c890" opacity="0.42"/><circle cx="259.7" cy="154.3" r="0.4" fill="#e8c890" opacity="0.42"/><circle cx="266.2" cy="162.0" r="0.6" fill="#e8c890" opacity="0.37"/><circle cx="245.2" cy="151.6" r="0.5" fill="#e8c890" opacity="0.78"/><circle cx="242.4" cy="101.7" r="0.8" fill="#e8c890" opacity="0.39"/><circle cx="207.0" cy="113.9" r="0.5" fill="#e8c890" opacity="0.89"/><circle cx="295.3" cy="106.5" r="0.4" fill="#e8c890" opacity="0.38"/><circle cx="266.0" cy="105.3" r="0.4" fill="#e8c890" opacity="0.50"/><circle cx="240.6" cy="135.0" r="0.8" fill="#e8c890" opacity="0.43"/><circle cx="229.4" cy="143.1" r="0.4" fill="#e8c890" opacity="0.81"/><circle cx="206.6" cy="130.9" r="0.6" fill="#e8c890" opacity="0.54"/><circle cx="208.2" cy="111.2" r="0.4" fill="#e8c890" opacity="0.49"/><circle cx="195.1" cy="157.2" r="0.8" fill="#e8c890" opacity="0.64"/><circle cx="207.7" cy="139.8" r="0.6" fill="#e8c890" opacity="0.78"/><circle cx="215.7" cy="162.0" r="0.5" fill="#e8c890" opacity="0.79"/><g filter="url(#g1)"><path d="M40 173c6-22 22-36 50-42l36-12h62l30 10c26 6 44 22 52 44z" fill="#2e3137"/><path d="M134 100h50v22c-6 12-14 18-25 18s-20-8-25-18z" fill="#cfa08a"/><path d="M126 120c8 18 22 26 33 26s24-8 30-26l6 2c-6 22-20 32-36 32s-32-12-38-32z" fill="#26282d"/><ellipse cx="196" cy="76" rx="5" ry="9" fill="#c99880"/><path d="M121 52c0-24 16-36 38-36s38 12 38 36c0 14-2 28-8 40-6 14-16 24-30 24s-24-10-30-24c-6-12-8-26-8-40z" fill="url(#f2)"/><path d="M113 58c-4-30 14-50 44-52 28-2 48 14 50 42 0 10-2 20-6 28-2-16-6-28-14-38-10-10-24-14-38-12-14 2-24 8-30 18-2 6-2 12-2 20z" fill="url(#h2)"/><path d="M150 6c4-3 8-3 12 0" stroke="#6e5844" stroke-width="3" fill="none"/><path d="M141 88c6-3 16-3 22 0-4 6-18 6-22 0z" fill="#c4777a"/><path d="M143 89c5 1.500 13 1.500 18 0" stroke="#f0e0dc" stroke-width="1.200" fill="none"/><path d="M144 66c4 6 12 6 16 0" stroke="#b88a78" stroke-width="2" fill="none"/><ellipse cx="138" cy="56" rx="4" ry="1.600" fill="#3a2a26"/><ellipse cx="174" cy="56" rx="4" ry="1.600" fill="#3a2a26"/><path d="M130 44c5-2 12-2 18 0M164 44c6-2 13-2 19 0" stroke="#6a5040" stroke-width="1.500" fill="none"/><ellipse cx="135" cy="80" rx="8" ry="6" fill="#d8a08c" opacity=".7"/><ellipse cx="176" cy="80" rx="8" ry="6" fill="#d8a08c" opacity=".7"/></g><g fill="none" stroke="#1d1d22" stroke-width="2.600"><rect x="121" y="47" width="33" height="18" rx="5"/><rect x="158" y="47" width="33" height="18" rx="5"/><path d="M191 52l8 2" stroke-width="2"/></g><path d="M122 47h32M158 47h33" stroke="#1d1d22" stroke-width="3.500"/><path d="M198 84c-2 14-8 30-14 44-6 12-18 28-22 45M120 112c6 20 12 40 16 60" stroke="#8a8a8a" stroke-width=".8" fill="none"/><rect x="181" y="116" width="3" height="12" fill="#111" transform="rotate(12 182 122)"/><rect x="193" y="73" width="6" height="4" fill="#111"/></g><path d="M1 1h304v162a9 9 0 0 1-9 9H10a9 9 0 0 1-9-9z" fill="none" stroke="#23d881" stroke-width="2"/></svg><div class="vlab" style="left:1291px;top:544px;width:139px;background:rgba(38,40,44,.8)"></div><div class="abs" style="left:1294px;top:543px;font-size:13.5px;line-height:18px;color:#fff;white-space:nowrap;letter-spacing:0.4px;text-shadow:0 0 2px #000">장애인권교육센터 나야</div><div class="abs" style="left:1335px;top:747px;width:208px;height:234px;border-radius:10px;background:#232323"></div><svg class="abs" style="left:1395px;top:747px" width="88" height="117" viewBox="0 0 88 117"><defs><filter id="g3" x="-10%" y="-10%" width="120%" height="120%"><feGaussianBlur stdDeviation=".8"/></filter><clipPath id="c3"><rect width="88" height="117"/></clipPath><linearGradient id="ceil" x1="0" y1="0" x2="0" y2="1"><stop offset="0" stop-color="#f1f1da"/><stop offset="1" stop-color="#e2e0b4"/></linearGradient></defs><g clip-path="url(#c3)"><rect width="88" height="117" fill="#c9b263"/><g filter="url(#g3)"><path d="M0 0h72L66 35H0z" fill="url(#ceil)"/><rect x="35" y="0" width="5" height="15" fill="#d4d4c0"/><rect x="52" y="0" width="8" height="5" fill="#8a8a80"/><ellipse cx="49" cy="26" rx="3" ry="1.500" fill="#d8d4b0"/><path d="M72 0h16v62H66V35z" fill="#d9c23e"/><path d="M67 60L88 52" stroke="#b59a22" stroke-width="1.100"/><path d="M67 53L88 44" stroke="#b59a22" stroke-width="1.100"/><path d="M67 46L88 36" stroke="#b59a22" stroke-width="1.100"/><path d="M67 39L88 28" stroke="#b59a22" stroke-width="1.100"/><path d="M67 32L88 20" stroke="#b59a22" stroke-width="1.100"/><path d="M67 25L88 12" stroke="#b59a22" stroke-width="1.100"/><path d="M67 18L88 4" stroke="#b59a22" stroke-width="1.100"/><path d="M67 11L88 -4" stroke="#b59a22" stroke-width="1.100"/><path d="M67 4L88 -12" stroke="#b59a22" stroke-width="1.100"/><path d="M82 46l6-4v30h-6z" fill="#c8d8a8"/><path d="M82 46l6-4" stroke="#5a8a4a" stroke-width="1.500"/><rect x="0" y="35" width="66" height="50" fill="#c6ae5e"/><rect x="69" y="62" width="19" height="20" fill="#bfc2c0"/><path d="M14 94c-1-14 3-30 10-38l6 2c-3 12-4 24-4 36z" fill="#3c3c44"/><path d="M17 90c0-12 3-24 8-32" stroke="#d8d8dc" stroke-width="2" fill="none" stroke-dasharray="2 2"/><path d="M22 58c1-3 3-4 5-3" stroke="#e8e8e8" stroke-width="1.500" fill="none"/><path d="M0 78l6-3 2 5-3 16H0z" fill="#1c1c20"/><path d="M48 33c-10 0-17 8-18 20-1 14-2 28-1 42l10 4h30l6-10c-2-12-6-24-8-36-2-12-9-20-19-20z" fill="#2c1e1a"/><path d="M19 96c1-12 8-20 20-23h24c12 1 22 8 25 16v7z" fill="#7b2a49"/><path d="M33 70c-2 10-3 18-1 27h12c-2-10-2-18-1-26zM60 68c3 10 6 18 5 28h10c-1-10-6-20-9-29z" fill="#2c1e1a"/><path d="M42 68h12v10c-3 3-9 3-12 0z" fill="#c8957c"/><ellipse cx="47.500" cy="54" rx="13" ry="16.500" fill="#d9a88e"/><path d="M34 50c1-10 7-16 14-16s12 5 13 14c-5-2-9-6-11-9-3 5-9 9-16 11z" fill="#2c1e1a"/><path d="M40 50h5M51 50h5" stroke="#4a302a" stroke-width="1.200"/><path d="M44 63c2 1 5 1 7 0" stroke="#a8605c" stroke-width="1.300" fill="none"/><path d="M47 54l-1 4h3" stroke="#c08a74" stroke-width="1" fill="none"/><path d="M16 96c2-7 8-11 14-9l2 9z" fill="#d3a186"/><rect x="0" y="96" width="88" height="21" fill="#5c564e"/><path d="M12 110h58l6 7H8z" fill="#2f5a50"/><rect x="12" y="108" width="30" height="3" fill="#d0a890"/></g></g></svg><div class="vlab" style="left:1338px;top:843px;width:165px;background:rgba(52,52,52,.82)"></div><div class="abs" style="left:1341px;top:842px;font-size:13px;line-height:18px;color:#fff;white-space:nowrap;letter-spacing:0.5px">민경선(진해장애인인권센...</div><div class="abs" style="left:1335px;top:911px;width:208px;text-align:center;font-size:15.5px;line-height:22px;font-weight:bold;color:#dcdcdc;white-space:nowrap;letter-spacing:0.6px">장애인권교육센...</div><div class="vlab" style="left:1338px;top:960px;width:159px;background:rgba(26,26,26,.9)"></div><svg class="abs" style="left:1341px;top:962px" width="12" height="14" viewBox="0 0 12 14"><rect x="3.800" y="1" width="4.400" height="7.500" rx="2.200" fill="#e0323c"/><path d="M2 7c0 2.500 1.800 4 4 4s4-1.500 4-4M6 11v2" fill="none" stroke="#e0323c" stroke-width="1.200"/><path d="M1 13L11 1" stroke="#e0323c" stroke-width="1.500"/></svg><div class="abs" style="left:1358px;top:959px;font-size:13px;line-height:18px;color:#fff;white-space:nowrap;letter-spacing:0.3px">장애인권교육센터 나야</div><div class="abs" style="left:1570px;top:852px;width:24px;height:24px;background:#0a0a0a"></div><svg class="abs" style="left:1576px;top:855px" width="11" height="18" viewBox="0 0 11 18"><path d="M2 1.500l7 7.500-7 7.500" fill="none" stroke="#fff" stroke-width="2"/></svg><div class="abs" style="left:1599px;top:44px;width:1px;height:937px;background:#1c1c1c"></div><div class="abs" style="left:1270px;top:528px;width:1px;height:26px;background:#888;box-shadow:3px 0 0 #888"></div><div class="abs" style="left:26px;top:873px;width:32px;height:32px;border-radius:16px;background:#1c1c1c"></div><svg class="abs" style="left:33px;top:880px" width="18" height="18" viewBox="0 0 18 18"><path d="M3 12.500L12 3.500l2.500 2.500-9 9H3zM2 16.500h12" fill="none" stroke="#22d47a" stroke-width="1.500" stroke-linejoin="round"/></svg>
<div id="zbar"></div>
<svg class="abs" style="left:38px;top:988px" width="30" height="30" viewBox="0 0 30 30"><rect x="10.500" y="3.500" width="7" height="13" rx="3.500" fill="none" stroke="#fff" stroke-width="1.400"/><path d="M7 13c0 4.500 3 7 7 7s7-2.500 7-7M14 20v5M10 25.500h8" fill="none" stroke="#fff" stroke-width="1.400"/><path d="M3 25L25 4" stroke="#e8255e" stroke-width="2.200"/></svg>
<div class="zl" style="left:-8px;">오디오</div>
<svg class="abs" style="left:79px;top:1000px" width="10" height="7" viewBox="0 0 10 7"><path d="M1.500 5.500l3.500-3.500 3.500 3.500" fill="none" stroke="#fff" stroke-width="1.500"/></svg>
<svg class="abs" style="left:131px;top:994px" width="28" height="18" viewBox="0 0 28 18"><rect x="1.500" y="2" width="17" height="14" rx="4" fill="none" stroke="#fff" stroke-width="1.500"/><path d="M20.500 7.500l5-3.500v10l-5-3.500z" fill="none" stroke="#fff" stroke-width="1.500" stroke-linejoin="round"/></svg>
<div class="zl" style="left:85px;">비디오</div>
<svg class="abs" style="left:177px;top:1000px" width="10" height="7" viewBox="0 0 10 7"><path d="M1.500 5.500l3.500-3.500 3.500 3.500" fill="none" stroke="#fff" stroke-width="1.500"/></svg>
<svg class="abs" style="left:530px;top:992px" width="24" height="22" viewBox="0 0 24 22"><circle cx="7" cy="6" r="3.300" fill="none" stroke="#fff" stroke-width="1.500"/><path d="M1 19c0-4.500 2.500-6.500 6-6.500s6 2 6 6.500c0 .8-.5 1-1 1H2c-.5 0-1-.2-1-1z" fill="none" stroke="#fff" stroke-width="1.500"/><circle cx="15.500" cy="8" r="2.800" fill="none" stroke="#fff" stroke-width="1.500"/><path d="M15 14c3 0 5 1.800 5 5 0 .7-.4 1-1 1h-4" fill="none" stroke="#fff" stroke-width="1.500"/></svg>
<div class="abs" style="left:557px;top:993px;font-size:12px;line-height:14px;color:#ddd">6</div>
<div class="zl" style="left:481px;">참가자</div>
<svg class="abs" style="left:589px;top:1000px" width="10" height="7" viewBox="0 0 10 7"><path d="M1.500 5.500l3.500-3.500 3.500 3.500" fill="none" stroke="#fff" stroke-width="1.500"/></svg>
<svg class="abs" style="left:638px;top:991px" width="26" height="24" viewBox="0 0 26 24"><path d="M8 5V4.500a3 3 0 0 1 3-3h9.500a3 3 0 0 1 3 3v7a3 3 0 0 1-3 3H20" fill="none" stroke="#fff" stroke-width="1.500"/><path d="M5 6h11a3 3 0 0 1 3 3v7a3 3 0 0 1-3 3H10l-4.500 3.500V19H5a3 3 0 0 1-3-3V9a3 3 0 0 1 3-3z" fill="none" stroke="#fff" stroke-width="1.500" stroke-linejoin="round"/><circle cx="7" cy="12.500" r="1" fill="#fff"/><circle cx="10.500" cy="12.500" r="1" fill="#fff"/><circle cx="14" cy="12.500" r="1" fill="#fff"/></svg>
<div class="zl" style="left:590px;">채팅</div>
<svg class="abs" style="left:679px;top:1000px" width="10" height="7" viewBox="0 0 10 7"><path d="M1.500 5.500l3.500-3.500 3.500 3.500" fill="none" stroke="#fff" stroke-width="1.500"/></svg>
<svg class="abs" style="left:723px;top:992px" width="26" height="23" viewBox="0 0 26 23"><path d="M13 20.500C7 17 2 13 2 8a5.500 5.500 0 0 1 11-1.500A5.500 5.500 0 0 1 24 8c0 5-5 9-11 12.500z" fill="none" stroke="#fff" stroke-width="1.500" stroke-linejoin="round" transform="rotate(-8 13 11)"/></svg>
<div class="zl" style="left:675px;">반응</div>
<svg class="abs" style="left:759px;top:1000px" width="10" height="7" viewBox="0 0 10 7"><path d="M1.500 5.500l3.500-3.500 3.500 3.500" fill="none" stroke="#fff" stroke-width="1.500"/></svg>
<div class="abs" style="left:812px;top:993px;width:25px;height:20px;border-radius:4px;background:#1be37c"></div>
<svg class="abs" style="left:818px;top:996px" width="13" height="14" viewBox="0 0 13 14"><path d="M6.500 13V3M2 7l4.500-4.500L11 7" fill="none" stroke="#000" stroke-width="2.200"/></svg>
<div class="zl" style="left:764px;">공유</div>
<svg class="abs" style="left:906px;top:989px" width="28" height="28" viewBox="0 0 28 28"><defs><linearGradient id="aig" x1="0" y1="0" x2="1" y2="1"><stop offset="0" stop-color="#fff"/><stop offset="1" stop-color="#9cc7e8"/></linearGradient></defs><path d="M12 4c1 6 3 8 10 10-7 2-9 4-10 10C11 18 9 16 2 14c7-2 9-4 10-10z" fill="url(#aig)"/><path d="M22 1c.4 2.500 1.300 3.400 4 4-2.700.6-3.600 1.500-4 4-.4-2.500-1.300-3.400-4-4 2.700-.6 3.600-1.500 4-4z" fill="#fff"/></svg>
<div class="zl" style="left:860px;font-weight:bold;font-size:11.5px;color:#e4e4e4;letter-spacing:0;padding-left:0">AI Companion</div>
<svg class="abs" style="left:1003px;top:991px" width="24" height="24" viewBox="0 0 24 24"><circle cx="12" cy="12" r="10.500" fill="none" stroke="#fff" stroke-width="1.500"/><circle cx="12" cy="7" r="1.300" fill="#fff"/><path d="M10 10.500h2.500V17M9.500 17.500h5.500" fill="none" stroke="#fff" stroke-width="1.600"/></svg>
<div class="zl" style="left:955px;">회의 정보</div>
<svg class="abs" style="left:1093px;top:992px" width="24" height="22" viewBox="0 0 24 22"><circle cx="17.500" cy="5.500" r="3.600" fill="none" stroke="#fff" stroke-width="1.500"/><circle cx="5.500" cy="16.500" r="3.600" fill="none" stroke="#fff" stroke-width="1.500"/><path d="M2 9V6a4 4 0 0 1 4-4h4M22 13v3a4 4 0 0 1-4 4h-4" fill="none" stroke="#fff" stroke-width="1.500"/></svg>
<div class="zl" style="left:1045px;">앱</div>
<svg class="abs" style="left:1175px;top:991px" width="24" height="24" viewBox="0 0 24 24"><circle cx="12" cy="12" r="10.500" fill="none" stroke="#fff" stroke-width="1.500"/><circle cx="7" cy="12" r="1.300" fill="#fff"/><circle cx="12" cy="12" r="1.300" fill="#fff"/><circle cx="17" cy="12" r="1.300" fill="#fff"/></svg>
<div class="zl" style="left:1127px;">더 보기</div>
<svg class="abs" style="left:1539px;top:990px" width="26" height="26" viewBox="0 0 26 26"><path d="M12 3l10-2v21l-7 2" fill="none" stroke="#e8255e" stroke-width="1.600"/><path d="M14.500 4v19" stroke="#e8255e" stroke-width="1.400"/><circle cx="9" cy="6" r="2.300" fill="none" stroke="#fff" stroke-width="1.400"/><path d="M5 13l3-3.500h3l2 4 3 1M8.500 10l-1 6 3 3v5M7.500 16l-2 3-3.500 2" fill="none" stroke="#fff" stroke-width="1.500" stroke-linejoin="round" stroke-linecap="round"/></svg>
<div class="zl" style="left:1491px;">나가기</div>
<div id="panel"><div id="panelhead"></div>
<div class="abs" style="left:0;top:12px;width:268px;text-align:center;font-size:13.5px;line-height:18px;font-weight:bold;color:#232333;letter-spacing:0.1px">참가자(6)</div>
<svg class="abs" style="left:268px;top:14px" width="16" height="16" viewBox="0 0 16 16"><path d="M7 2.500H4a2.500 2.500 0 0 0-2.500 2.500v7A2.500 2.500 0 0 0 4 14.500h7a2.500 2.500 0 0 0 2.500-2.500V9" fill="none" stroke="#444" stroke-width="1.400"/><path d="M9.500 1.500h5v5M14.500 1.500l-7 7" fill="none" stroke="#444" stroke-width="1.400"/></svg>
<svg class="abs" style="left:297px;top:17px" width="11" height="11" viewBox="0 0 11 11"><path d="M.5 .5l10 10M10.500 .5l-10 10" stroke="#555" stroke-width="1.200"/></svg>
<div class="pn" style="top:57px">진해장애인인권센터 (나)</div>
<svg class="abs" style="left:262px;top:55px" width="20" height="22" viewBox="0 0 20 22"><rect x="7" y="2.500" width="6" height="10" rx="3" fill="none" stroke="#d8343c" stroke-width="1.100"/><path d="M4.500 10.500c0 3.500 2.500 5.500 5.500 5.500s5.500-2 5.500-5.500M10 16v3M7 19.500h6" fill="none" stroke="#d8343c" stroke-width="1.100"/><path d="M3 19.500L17 2" stroke="#d8343c" stroke-width="1.300"/></svg>
<svg class="abs" style="left:286px;top:57px" width="20" height="18" viewBox="0 0 20 18"><rect x="1.500" y="4.500" width="12" height="9.500" rx="2.200" fill="none" stroke="#8e8e9a" stroke-width="1.200"/><path d="M15 8l3.500-2.200v6.800L15 10.400z" fill="none" stroke="#8e8e9a" stroke-width="1.200" stroke-linejoin="round"/></svg>
<div class="pn" style="top:98px">장애인권교육센터 ...</div>
<svg class="abs" style="left:262px;top:96px" width="20" height="22" viewBox="0 0 20 22"><rect x="7" y="2.500" width="6" height="10" rx="3" fill="#b9b9c2" stroke="#8e8e9a" stroke-width="1.100"/><path d="M4.500 10.500c0 3.500 2.500 5.500 5.500 5.500s5.500-2 5.500-5.500M10 16v3M7 19.500h6" fill="none" stroke="#8e8e9a" stroke-width="1.200"/></svg>
<svg class="abs" style="left:286px;top:98px" width="20" height="18" viewBox="0 0 20 18"><rect x="1.500" y="4.500" width="12" height="9.500" rx="2.200" fill="none" stroke="#8e8e9a" stroke-width="1.200"/><path d="M15 8l3.500-2.200v6.800L15 10.400z" fill="none" stroke="#8e8e9a" stroke-width="1.200" stroke-linejoin="round"/></svg>
<div class="av" style="top:134px;background:#c5362b;">민</div>
<div class="pn" style="top:139px">민경선(진해장애인인권센터)</div>
<svg class="abs" style="left:262px;top:137px" width="20" height="22" viewBox="0 0 20 22"><rect x="7" y="2.500" width="6" height="10" rx="3" fill="#b9b9c2" stroke="#8e8e9a" stroke-width="1.100"/><path d="M4.500 10.500c0 3.500 2.500 5.500 5.500 5.500s5.500-2 5.500-5.500M10 16v3M7 19.500h6" fill="none" stroke="#8e8e9a" stroke-width="1.200"/></svg>
<svg class="abs" style="left:286px;top:139px" width="20" height="18" viewBox="0 0 20 18"><rect x="1.500" y="4.500" width="12" height="9.500" rx="2.200" fill="none" stroke="#8e8e9a" stroke-width="1.200"/><path d="M15 8l3.500-2.200v6.800L15 10.400z" fill="none" stroke="#8e8e9a" stroke-width="1.200" stroke-linejoin="round"/></svg>
<div class="av" style="top:175px;background:#8d3fb5;">경</div>
<div class="pn" style="top:180px">경기협의회 태경</div>
<svg class="abs" style="left:262px;top:178px" width="20" height="22" viewBox="0 0 20 22"><rect x="7" y="2.500" width="6" height="10" rx="3" fill="none" stroke="#d8343c" stroke-width="1.100"/><path d="M4.500 10.500c0 3.500 2.500 5.500 5.500 5.500s5.500-2 5.500-5.500M10 16v3M7 19.500h6" fill="none" stroke="#d8343c" stroke-width="1.100"/><path d="M3 19.500L17 2" stroke="#d8343c" stroke-width="1.300"/></svg>
<svg class="abs" style="left:286px;top:180px" width="20" height="18" viewBox="0 0 20 18"><rect x="1.500" y="4.500" width="12" height="9.500" rx="2.200" fill="none" stroke="#d8343c" stroke-width="1.200"/><path d="M15 8l3.500-2.200v6.800L15 10.400z" fill="none" stroke="#d8343c" stroke-width="1.200" stroke-linejoin="round"/><path d="M2 16.500L18.500 2.500" stroke="#d8343c" stroke-width="1.300"/></svg>
<div class="av" style="top:216px;background:#4a2aa8;font-size:12px;letter-spacing:-0.5px;">상훈</div>
<div class="pn" style="top:221px">이상훈</div>
<svg class="abs" style="left:262px;top:219px" width="20" height="22" viewBox="0 0 20 22"><rect x="7" y="2.500" width="6" height="10" rx="3" fill="none" stroke="#d8343c" stroke-width="1.100"/><path d="M4.500 10.500c0 3.500 2.500 5.500 5.500 5.500s5.500-2 5.500-5.500M10 16v3M7 19.500h6" fill="none" stroke="#d8343c" stroke-width="1.100"/><path d="M3 19.500L17 2" stroke="#d8343c" stroke-width="1.300"/></svg>
<svg class="abs" style="left:286px;top:221px" width="20" height="18" viewBox="0 0 20 18"><rect x="1.500" y="4.500" width="12" height="9.500" rx="2.200" fill="none" stroke="#d8343c" stroke-width="1.200"/><path d="M15 8l3.500-2.200v6.800L15 10.400z" fill="none" stroke="#d8343c" stroke-width="1.200" stroke-linejoin="round"/><path d="M2 16.500L18.500 2.500" stroke="#d8343c" stroke-width="1.300"/></svg>
<div class="av" style="top:257px;background:#2b7bbf;">장</div>
<div class="pn" style="top:262px">장애인권교육센터 나야</div>
<svg class="abs" style="left:262px;top:260px" width="20" height="22" viewBox="0 0 20 22"><rect x="7" y="2.500" width="6" height="10" rx="3" fill="none" stroke="#d8343c" stroke-width="1.100"/><path d="M4.500 10.500c0 3.500 2.500 5.500 5.500 5.500s5.500-2 5.500-5.500M10 16v3M7 19.500h6" fill="none" stroke="#d8343c" stroke-width="1.100"/><path d="M3 19.500L17 2" stroke="#d8343c" stroke-width="1.300"/></svg>
<svg class="abs" style="left:286px;top:262px" width="20" height="18" viewBox="0 0 20 18"><rect x="1.500" y="4.500" width="12" height="9.500" rx="2.200" fill="none" stroke="#d8343c" stroke-width="1.200"/><path d="M15 8l3.500-2.200v6.800L15 10.400z" fill="none" stroke="#d8343c" stroke-width="1.200" stroke-linejoin="round"/><path d="M2 16.500L18.500 2.500" stroke="#d8343c" stroke-width="1.300"/></svg>
<svg class="abs" style="left:22px;top:52px" width="27" height="27" viewBox="0 0 27 27"><path d="M.8 14C-.2 6 2.800 .8 6.500 .8s6.500 5 5.500 11.500c-.8 5-3.200 10-6.800 10.500C2.500 23 1.300 19 .8 14z" fill="#8cc220"/><circle cx="17" cy="5.300" r="2" fill="#8cc220"/><path d="M10.300 25.500C10.300 16 17 9 26.500 8.800V22h-6.300v4h-9.500z" fill="#f06a0a"/></svg>
<svg class="abs" style="left:22px;top:92px" width="28" height="28" viewBox="0 0 28 28"><path d="M1 17c1-3 4-4 6-2l3 8-1 4H4c-2-3-3-6-3-10z" fill="#c9ad86"/><path d="M27 17c-1-3-4-4-6-2l-3 8 1 4h5c2-3 3-6 3-10z" fill="#c9ad86"/><path d="M3 19l3 6M25 19l-3 6M5 17l3 7M23 17l-3 7" stroke="#6a5238" stroke-width=".8"/><path d="M11 27l1-6 4-2 3 3-1 5z" fill="#141414"/><path d="M5 12c3-2 6-2 9 0 3-2 7-2 9 0-1 3-4 4-7 3l-2 1-2-1c-3 1-6 0-7-3z" fill="#2a8a3a"/><path d="M9 27c1-5 0-9 2-12l3-2 2 3c-2 3-1 7-2 11z" fill="#2f9a40"/><path d="M13 11l9 8-3 3-9-8z" fill="#e8453e"/><path d="M14 13l6 6M16 12l5 5" stroke="#f6b0a8" stroke-width=".8"/><ellipse cx="14" cy="6.500" rx="6.800" ry="5.800" fill="#d6332e"/><path d="M9 5c2-3 7-3 10 0M10 8c2 2 6 2 8 0M14 2v3" stroke="#8a1418" stroke-width=".9" fill="none"/></svg>
<div class="pn" style="left:189px;top:98px;letter-spacing:0">(호스트)</div>
<div class="abs" style="left:240px;top:101px;width:16px;height:11px;border-radius:2px;background:#16a335"></div><svg class="abs" style="left:244px;top:102px" width="8" height="9" viewBox="0 0 8 9"><path d="M4 8V2.500M1.500 4.500L4 2l2.500 2.500" fill="none" stroke="#fff" stroke-width="1.600"/></svg>
<div class="pbtn" style="left:50px;width:49px">초대</div>
<div class="pbtn" style="left:148px;width:122px">나만 음소거 해제</div>
</div>
<div id="taskbar"></div>
<div class="abs" style="left:1600px;top:1039px;width:320px;height:1px;background:#4a4a4a"></div><div class="abs" style="left:1915px;top:1040px;width:1px;height:40px;background:#b8b2a0"></div>
<svg class="abs" style="left:16px;top:1052px" width="17" height="17" viewBox="0 0 17 17"><path d="M0 2.300L7 1.300v6.700H0zM8 1.150L17 0v8H8zM0 9h7v6.700l-7-1zM8 9h9v8l-9-1.150z" fill="#000"/></svg>
<div class="abs" style="left:49px;top:1041px;width:286px;height:39px;background:#fff"></div>
<svg class="abs" style="left:59px;top:1051px" width="18" height="18" viewBox="0 0 18 18"><circle cx="11" cy="7" r="5.300" fill="none" stroke="#222" stroke-width="1.400"/><path d="M7 11L1 17" stroke="#222" stroke-width="1.500"/></svg>
<div class="tk" style="left:88px;top:1050px;font-size:15px;line-height:20px;color:#333">찾기</div>
<svg class="abs" style="left:350px;top:1052px" width="19" height="16" viewBox="0 0 19 16"><rect x="2.500" y="3.500" width="10" height="8" fill="none" stroke="#111" stroke-width="1.300"/><path d="M0 1h13M0 14.500h13" stroke="#111" stroke-width="1.300"/><path d="M1 1v2M12 1v2M1 12.500v2M12 12.500v2" stroke="#111" stroke-width="1.300"/><rect x="16" y="3" width="2.500" height="2.500" fill="#111"/><path d="M17.200 8v6.500" stroke="#111" stroke-width="1.300"/></svg>
<svg class="abs" style="left:397px;top:1047px" width="28" height="26" viewBox="0 0 28 26"><defs><linearGradient id="cp1" x1="0" y1="0" x2="0" y2="1"><stop offset="0" stop-color="#1a8cf0"/><stop offset=".45" stop-color="#2fb7b0"/><stop offset=".75" stop-color="#b8d02a"/><stop offset="1" stop-color="#f4c21a"/></linearGradient><linearGradient id="cp2" x1="0.600" y1="0" x2="0.300" y2="1"><stop offset="0" stop-color="#a952f0"/><stop offset=".45" stop-color="#ee5a9c"/><stop offset="1" stop-color="#fb9a42"/></linearGradient></defs><path d="M6.600 1.500h9.500c2.500 0 3.800 1.500 4.100 4.300-2.500.2-4.300 1.500-5.200 4.200l-1.800 6.600c-.6 1.800-1.800 2.400-3.700 2.400H4.500c-1.800 0-2.500-1.300-2.100-3.400L4.300 5c.4-2.200 1.200-3.500 2.300-3.500z" fill="url(#cp1)"/><path d="M16.100 1.500c2.500 0 3.800 1.500 4.100 4.300-1.500.1-2.700.6-3.600 1.600.1-2.800-.3-4.800-2.500-5.900z" fill="#1a5ad8"/><path d="M16.400 8.600h6.800c2.400 0 3.500 1 3.100 2.800l-2.800 8c-.9 2.400-1.700 3.300-3.300 3.300h-8.500c-2 0-3.200-1.400-3.700-4.300 2.600 0 4.100-.6 4.700-2.400l1.800-5.500c.4-1.200 1-1.900 1.900-1.900z" fill="url(#cp2)"/><path d="M8 18.400c2.400 0 4-.4 4.700-1.800-.5 2.500-.3 4.400 1 6.100h-2c-2 0-3.200-1.400-3.700-4.300z" fill="#e8452a"/></svg>
<svg class="abs" style="left:446px;top:1047px" width="27" height="27" viewBox="0 0 27 27"><defs><linearGradient id="ed1" x1="0" y1="0.300" x2="1" y2="0.600"><stop offset="0" stop-color="#1c9fe6"/><stop offset=".5" stop-color="#2fbfc4"/><stop offset="1" stop-color="#62dc5e"/></linearGradient><linearGradient id="ed2" x1="0" y1="0" x2="1" y2="1"><stop offset="0" stop-color="#1a86dc"/><stop offset="1" stop-color="#0e4f9e"/></linearGradient></defs><path d="M13.500 1C20.500 1 26 6 26 12c0 2.600-1.600 4.600-4.600 4.600-3.400 0-5.400-1-5.400-2.400 0-.8.600-1.400.6-2.400 0-1.200-1.200-2.200-2.900-2.200C9.500 9.600 5 12.500 5 17c0 1.500.3 3 1 4.300C2.800 19.300 1 16.500 1 13.500 1 6.500 6.500 1 13.500 1z" fill="url(#ed1)"/><path d="M1 13.500C1 9 5.500 6.500 9.500 6.500c3 0 5.500 1.500 6.600 3.600-.7-.4-1.500-.5-2.400-.5C9.500 9.600 6.500 12.500 6.500 16.500c0 5 4 9.500 9.500 9.500 1.200 0 2.300-.2 3.400-.6-1.800.7-3.800 1.100-5.900 1.100C6.500 26.500 1 20.500 1 13.500z" fill="url(#ed2)"/><path d="M10.500 14.800c0 4.500 3.500 7.800 8 7.800 2.500 0 4.800-1.300 6.300-3.600.3-.5.900-.2.700.3-1.500 4-5.500 7.200-10.500 7.200-5 0-8.500-4.300-8.500-9 0-4 3-7.600 6.600-7.900-1.600 1.200-2.600 3-2.600 5.200z" fill="#0e4a94"/></svg>
<svg class="abs" style="left:496px;top:1049px" width="25" height="23" viewBox="0 0 25 23"><path d="M1 2h8l2 2.500h13V20H1z" fill="#f6c23c"/><rect x="1" y="1" width="8" height="2.500" fill="#d99a1c"/><path d="M1 6h23v14H1z" fill="#fbd768"/><path d="M6 14h13v8h-3v-4.500h-7V22H6z" fill="#3a8fdc"/></svg>
<div class="abs" style="left:489px;top:1077px;width:34px;height:3px;background:#1979ca"></div><div class="abs" style="left:523px;top:1077px;width:6px;height:3px;background:#7db4e2"></div>
<svg class="abs" style="left:545px;top:1048px" width="25" height="25" viewBox="0 0 25 25"><rect x="0" y="0" width="25" height="25" rx="3" fill="#3a7be0"/><path d="M19 25h3a3 3 0 0 0 3-3V5h-6z" fill="#f5ba1a"/><path d="M0 19v3a3 3 0 0 0 3 3h16v-6z" fill="#2e9e4a"/><path d="M19 19h6l-6 6z" fill="#e0412f"/><rect x="4" y="4" width="15.500" height="15.500" fill="#fff"/><text x="11.600" y="16.800" font-size="12.500" font-weight="bold" text-anchor="middle" fill="#3a7be0" font-family="Liberation Sans, sans-serif" letter-spacing="-0.8">10</text></svg>
<div class="abs" style="left:583px;top:1040px;width:48px;height:40px;background:#f8b184"></div><div class="abs" style="left:583px;top:1077px;width:48px;height:3px;background:#f4731f"></div>
<svg class="abs" style="left:594px;top:1048px" width="26" height="26" viewBox="0 0 26 26"><rect width="26" height="26" rx="5" fill="#fde20a"/><ellipse cx="13" cy="11.500" rx="9.500" ry="7.500" fill="#3b1e1e"/><path d="M8 17l-1 5 5-4z" fill="#3b1e1e"/><text x="13" y="14" font-size="6" font-weight="bold" text-anchor="middle" fill="#fde20a" font-family="Liberation Sans, sans-serif">TALK</text></svg>
<svg class="abs" style="left:644px;top:1048px" width="25" height="25" viewBox="0 0 25 25"><path d="M1 4a3 3 0 0 1 3-3h17l3 3v17a3 3 0 0 1-3 3H4a3 3 0 0 1-3-3z" fill="#1c8fd6"/><text x="12.500" y="19" font-size="17" font-weight="bold" text-anchor="middle" fill="#fff" font-family="Liberation Sans, Noto Sans CJK KR, sans-serif">호</text></svg>
<svg class="abs" style="left:692px;top:1048px" width="27" height="25" viewBox="0 0 27 25"><rect x="8" y="1" width="18" height="23" rx="1.500" fill="#21a366"/><rect x="17" y="1" width="9" height="7.500" fill="#33c481"/><rect x="17" y="8.500" width="9" height="7.500" fill="#107c41"/><rect x="8" y="8.500" width="9" height="7.500" fill="#185c37"/><rect x="17" y="16" width="9" height="8" fill="#185c37"/><rect x="0" y="5.500" width="14" height="14" rx="1.500" fill="#107c41"/><path d="M4 9l6 7M10 9l-6 7" stroke="#fff" stroke-width="2"/></svg>
<svg class="abs" style="left:743px;top:1049px" width="22" height="22" viewBox="0 0 27 27"><circle cx="13.500" cy="13.500" r="13" fill="#2aa3dc"/><path d="M5.500 13l14.500-6-2.500 13-4.500-3.500-2.500 2.500-.5-4 7-6-8.500 5z" fill="#fff"/></svg>
<svg class="abs" style="left:789px;top:1047px" width="28" height="27" viewBox="0 0 28 27"><path d="M3 17C3 8 9 2 16 2c5 0 9 3 10.500 7-2-1-5 0-6 3-1 4-4 8-9 9l-5 4 1-4c-2.500-.8-4.500-2-4.500-4z" fill="#1dc8b4"/><path d="M8 8c3-5 10-7 15-3 1 1 2.500 2.500 3 4-5-2-12 0-18-1z" fill="#1c2f7a"/><path d="M26.500 9c1 5-1 10-5 13-2 1.500-5 2-7 1.500 4-2 6-6 6.500-9.500.5-3 3-5.500 5.500-5z" fill="#eef4f6"/></svg>
<div class="abs" style="left:828px;top:1041px;width:45px;height:39px;background:#f3efe6"></div>
<svg class="abs" style="left:839px;top:1048px" width="25" height="25" viewBox="0 0 27 27"><circle cx="13.500" cy="13.500" r="13" fill="#1f55e8"/><text x="13.500" y="17.500" font-size="11" font-weight="bold" text-anchor="middle" fill="#fff" font-family="Liberation Sans, sans-serif" letter-spacing="-0.5">zm</text></svg>
<div class="abs" style="left:668px;top:1077px;width:8px;height:3px;background:#7db4e2"></div>
<div class="abs" style="left:637px;top:1077px;width:31px;height:3px;background:#1979ca"></div>
<div class="abs" style="left:685px;top:1077px;width:40px;height:3px;background:#1979ca"></div>
<div class="abs" style="left:734px;top:1077px;width:39px;height:3px;background:#1979ca"></div>
<div class="abs" style="left:783px;top:1077px;width:39px;height:3px;background:#1979ca"></div>
<div class="abs" style="left:828px;top:1077px;width:44px;height:3px;background:#1979ca"></div>
<svg class="abs" style="left:1614px;top:1055px" width="14" height="9" viewBox="0 0 14 9"><path d="M1 8l6-6 6 6" fill="none" stroke="#111" stroke-width="1.500"/></svg>
<div class="abs" style="left:1637px;top:1052px;width:16px;height:16px;background:#f3f1ea"></div><svg class="abs" style="left:1638px;top:1052px" width="14" height="16" viewBox="0 0 16 19"><path d="M8 1c2 1.500 4.500 2 7 2.200v6c0 4-3 7-7 8.500-4-1.500-7-4.500-7-8.500v-6C3.500 3 6 2.500 8 1z" fill="#eaf6fd" stroke="#1a9ae0" stroke-width="1.600"/><circle cx="8" cy="8" r="1.800" fill="#1a9ae0"/><rect x="7.200" y="9" width="1.600" height="4" fill="#1a9ae0"/></svg>
<svg class="abs" style="left:1661px;top:1051px" width="17" height="18" viewBox="0 0 17 18"><rect x="2" y="5" width="9" height="9" rx="2" fill="none" stroke="#111" stroke-width="1.300"/><path d="M11 8.500l3.500-2v6l-3.500-2" fill="none" stroke="#111" stroke-width="1.300"/><path d="M3.500 3a4 4 0 0 1 6 0M3.500 16a4 4 0 0 0 6 0" fill="none" stroke="#111" stroke-width="1.200"/></svg>
<svg class="abs" style="left:1685px;top:1050px" width="15" height="20" viewBox="0 0 15 20"><rect x="4.500" y="1" width="6" height="11" rx="3" fill="#111"/><path d="M2 9.500c0 3.500 2.500 5.500 5.500 5.500s5.500-2 5.500-5.500M7.500 15v3M4.500 18.500h6" fill="none" stroke="#111" stroke-width="1.400"/></svg>
<svg class="abs" style="left:1707px;top:1053px" width="19" height="15" viewBox="0 0 19 15"><rect x="4.500" y="1" width="13" height="9" fill="none" stroke="#111" stroke-width="1.300"/><path d="M8 13.500h7M11 10v3.500" stroke="#111" stroke-width="1.300"/><rect x="0.700" y="0.700" width="5" height="6" fill="#e8e1d3" stroke="#111" stroke-width="1.200"/><path d="M3.200 6.700v4" stroke="#111" stroke-width="1.200"/></svg>
<div class="tk" style="left:1731px;top:1048px;font-size:20px;line-height:24px">A</div>
<div class="abs" style="left:1761px;top:1052px;width:16px;height:16px;border:1px solid #222;background:#fff"></div><div class="tk" style="left:1763px;top:1051px;font-size:12px;line-height:18px;font-weight:500">한</div>
<div class="tk" style="left:1777px;top:1042px;width:100px;text-align:center;font-size:12.5px;line-height:18px">오전 11:10</div>
<div class="tk" style="left:1777px;top:1060px;width:100px;text-align:center;font-size:12.5px;line-height:18px">2025-05-02</div>
<svg class="abs" style="left:1878px;top:1051px" width="26" height="24" viewBox="0 0 26 24"><path d="M1 1h16v12H8l-3 3.500V13H1z" fill="#111"/><path d="M4 4.500h10M4 7h10M4 9.500h7" stroke="#e8e1d3" stroke-width="1"/><circle cx="16.500" cy="16" r="7.200" fill="#cbc7bb" stroke="#8f8c82" stroke-width="1"/><text x="16.500" y="20.500" font-size="12" font-weight="bold" text-anchor="middle" fill="#111" font-family="Liberation Sans, sans-serif">1</text></svg>
</body></html>
